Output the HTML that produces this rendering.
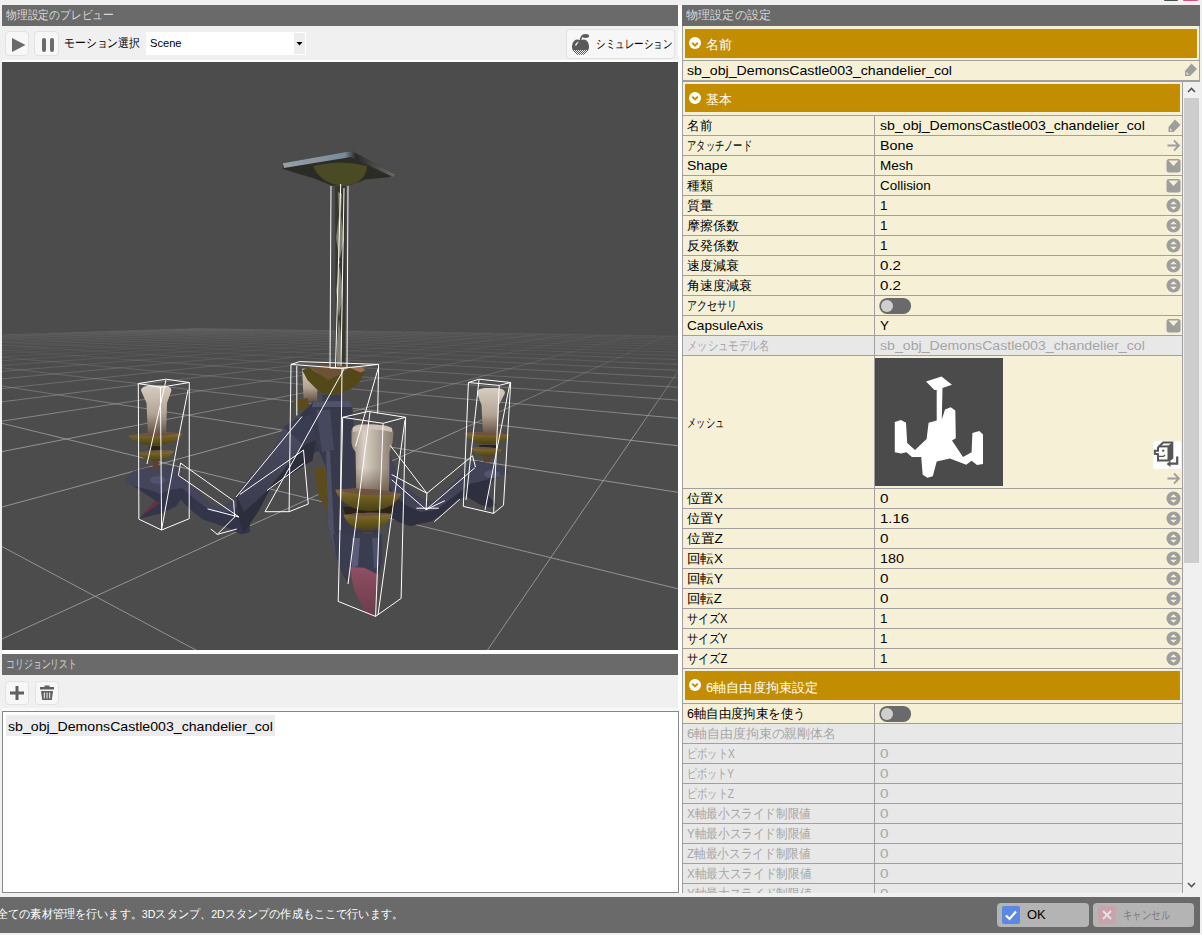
<!DOCTYPE html>
<html><head><meta charset="utf-8">
<style>
*{box-sizing:border-box;margin:0;padding:0}
html,body{width:1202px;height:935px;overflow:hidden;background:#f0f0f0;font-family:"Liberation Sans",sans-serif;color:#000}
.abs{position:absolute}
.hdr{position:absolute;background:#6a6a6a;color:#d8d8d8;font-size:12px;line-height:21px;padding-left:4px;white-space:nowrap;overflow:hidden}
.fit{display:inline-block;transform-origin:0 50%;white-space:nowrap}
.btn{position:absolute;background:#f7f7f7;border:1px solid #e2e2e2;border-radius:4px}
.gold{position:absolute;background:#c28e00;color:#fff;font-size:13px;white-space:nowrap}
.gold .ic{position:absolute;left:4px;top:8px;width:12px;height:12px;border-radius:50%;background:#fff}
.gold .tx{position:absolute;left:21px;top:2px;line-height:28px}
.row{position:absolute;left:0;width:500px;height:20px;border-bottom:1px solid #a0a0a0;background:#f6f0d6;font-size:14px;white-space:nowrap}
.row .k{position:absolute;left:4px;top:0;line-height:20px}
.row .v{position:absolute;left:197px;top:0;line-height:20px}
.row.dis{background:#e8e8e8;color:#a2a2a2}
.spin{position:absolute;left:484px;top:3px;width:14px;height:14px}
.dd{position:absolute;left:484px;top:3px;width:14px;height:14px}
</style></head><body>

<!-- LEFT PANEL -->
<div class="abs" style="left:678px;top:5px;width:4px;height:888px;background:#fff"></div>
<div class="hdr" style="left:2px;top:5px;width:676px;height:21px"><span class="fit" style="--w:108">物理設定のプレビュー</span></div>
<div class="abs" style="left:2px;top:26px;width:676px;height:36px;background:#f0f0f0"></div>
<div class="abs" style="left:2px;top:60px;width:676px;height:2px;background:#fff"></div>
<div class="btn" style="left:5px;top:31px;width:24px;height:25px">
  <svg width="24" height="25" style="position:absolute;left:-1px;top:-1px"><path d="M7 7 L20.5 14 L7 21 Z" fill="#6a6a6a"/></svg>
</div>
<div class="btn" style="left:34px;top:31px;width:25px;height:25px">
  <svg width="25" height="25" style="position:absolute;left:-1px;top:-1px"><rect x="8" y="7" width="4" height="14" rx="2" fill="#6a6a6a"/><rect x="16" y="7" width="4" height="14" rx="2" fill="#6a6a6a"/></svg>
</div>
<div class="abs" style="left:64px;top:35px;font-size:12px;line-height:17px;white-space:nowrap"><span class="fit" style="--w:76">モーション選択</span></div>
<div class="abs" style="left:146px;top:32px;width:160px;height:23px;background:#fff"></div>
<div class="abs" style="left:294px;top:33px;width:11px;height:21px;background:#ededed"></div>
<svg class="abs" style="left:294px;top:33px" width="11" height="21"><path d="M2.5 9 L8.5 9 L5.5 12.5 Z" fill="#000"/></svg>
<div class="abs" style="left:150px;top:36px;font-size:11px;line-height:15px"><span class="fit" style="--w:31.5">Scene</span></div>
<div class="btn" style="left:566px;top:29px;width:109px;height:30px">
  <svg width="26" height="26" style="position:absolute;left:2px;top:2px">
    <defs><pattern id="dith" width="2" height="2" patternUnits="userSpaceOnUse"><rect width="1" height="1" fill="#555"/><rect x="1" y="1" width="1" height="1" fill="#555"/></pattern></defs>
    <clipPath id="apc"><path d="M11.5 8.5 Q8 6.5 5 9 Q2.2 12 3.2 16.5 Q4.5 21.5 8.5 22.8 Q10.5 23.2 11.5 22.5 Q12.5 23.2 14.5 22.8 Q18.5 21.5 19.8 16.5 Q20.8 12 18 9 Q15 6.5 11.5 8.5 Z"/></clipPath>
    <g clip-path="url(#apc)"><rect x="0" y="0" width="26" height="18" fill="#5a5a5a"/><rect x="0" y="18" width="26" height="9" fill="url(#dith)"/></g><path d="M6 13 Q7 10 10 9.5 Q8 12 7 14 Z" fill="#f7f7f7"/>
    <path d="M11.5 9 Q11.5 5.5 13.5 3.5" stroke="#555" stroke-width="1.5" fill="none"/>
    <ellipse cx="16.5" cy="4" rx="3.6" ry="1.9" fill="#5a5a5a"/>
  </svg>
  <div class="abs" style="left:29px;top:6px;font-size:12px;line-height:17px;white-space:nowrap"><span class="fit" style="--w:76">シミュレーション</span></div>
</div>

<!-- VIEWPORT -->
<div class="abs" style="left:2px;top:62px;width:676px;height:588px;background:#4c4c4c;overflow:hidden">
<svg width="676" height="588" style="position:absolute;left:0;top:0"><path d="M61.4 292.8L43.2 291.4M43.2 291.4L26.3 290.2M26.3 290.2L10.6 289.0M10.6 289.0L-4.1 287.9M147.2 292.4L125.7 291.1M125.7 291.1L105.8 289.9M105.8 289.9L87.3 288.7M87.3 288.7L70.0 287.6M70.0 287.6L53.8 286.6M53.8 286.6L38.7 285.7M38.7 285.7L24.4 284.8M24.4 284.8L11.1 284.0M11.1 284.0L-1.6 283.2M-1.6 283.2L-13.5 282.4M233.9 292.1L209.0 290.7M209.0 290.7L186.0 289.5M186.0 289.5L164.6 288.4M164.6 288.4L144.6 287.3M144.6 287.3L126.0 286.3M126.0 286.3L108.5 285.4M108.5 285.4L92.1 284.5M92.1 284.5L76.6 283.7M76.6 283.7L62.1 282.9M62.1 282.9L48.3 282.1M48.3 282.1L35.4 281.4M35.4 281.4L23.1 280.8M23.1 280.8L11.4 280.2M11.4 280.2L0.3 279.6M0.3 279.6L-10.2 279.0M293.1 290.4L266.9 289.2M266.9 289.2L242.6 288.0M242.6 288.0L219.9 287.0M219.9 287.0L198.7 286.0M198.7 286.0L178.8 285.1M178.8 285.1L160.2 284.2M160.2 284.2L142.7 283.4M142.7 283.4L126.2 282.6M126.2 282.6L110.6 281.9M110.6 281.9L95.8 281.2M95.8 281.2L81.9 280.5M81.9 280.5L68.7 279.9M68.7 279.9L56.1 279.3M56.1 279.3L44.2 278.8M44.2 278.8L32.8 278.2M32.8 278.2L22.0 277.7M22.0 277.7L11.7 277.2M11.7 277.2L1.8 276.8M1.8 276.8L-7.6 276.3M377.8 290.1L348.5 288.8M348.5 288.8L321.2 287.7M321.2 287.7L295.7 286.6M295.7 286.6L271.9 285.7M271.9 285.7L249.7 284.7M249.7 284.7L228.8 283.9M228.8 283.9L209.2 283.1M209.2 283.1L190.7 282.3M190.7 282.3L173.2 281.6M173.2 281.6L156.7 280.9M156.7 280.9L141.1 280.2M141.1 280.2L126.3 279.6M126.3 279.6L112.2 279.0M112.2 279.0L98.9 278.5M98.9 278.5L86.2 278.0M86.2 278.0L74.1 277.5M74.1 277.5L62.5 277.0M62.5 277.0L51.5 276.5M51.5 276.5L40.9 276.1M40.9 276.1L30.8 275.7M30.8 275.7L21.2 275.3M21.2 275.3L11.9 274.9M11.9 274.9L3.0 274.5M3.0 274.5L-5.5 274.2M463.4 289.7L430.7 288.5M430.7 288.5L400.4 287.4M400.4 287.4L372.2 286.3M372.2 286.3L345.8 285.3M345.8 285.3L321.1 284.4M321.1 284.4L297.9 283.6M297.9 283.6L276.1 282.8M276.1 282.8L255.6 282.0M255.6 282.0L236.2 281.3M236.2 281.3L218.0 280.6M218.0 280.6L200.7 280.0M200.7 280.0L184.3 279.4M184.3 279.4L168.7 278.8M168.7 278.8L153.9 278.2M153.9 278.2L139.8 277.7M139.8 277.7L126.4 277.2M126.4 277.2L113.6 276.7M113.6 276.7L101.4 276.3M101.4 276.3L89.7 275.8M89.7 275.8L78.6 275.4M78.6 275.4L67.9 275.0M67.9 275.0L57.6 274.7M57.6 274.7L47.8 274.3M47.8 274.3L38.3 273.9M38.3 273.9L29.2 273.6M29.2 273.6L20.5 273.3M20.5 273.3L12.1 273.0M12.1 273.0L4.0 272.7M549.6 289.3L513.7 288.1M513.7 288.1L480.3 287.0M480.3 287.0L449.2 286.0M449.2 286.0L420.2 285.0M420.2 285.0L393.0 284.1M393.0 284.1L367.5 283.3M367.5 283.3L343.5 282.5M343.5 282.5L321.0 281.7M321.0 281.7L299.7 281.0M299.7 281.0L279.6 280.3M279.6 280.3L260.6 279.7M260.6 279.7L242.6 279.1M242.6 279.1L225.5 278.5M225.5 278.5L209.2 278.0M209.2 278.0L193.8 277.4M193.8 277.4L179.0 277.0M179.0 277.0L165.0 276.5M165.0 276.5L151.6 276.0M151.6 276.0L138.8 275.6M138.8 275.6L126.5 275.2M126.5 275.2L114.8 274.8M114.8 274.8L103.5 274.4M103.5 274.4L92.7 274.1M92.7 274.1L82.3 273.7M82.3 273.7L72.4 273.4M72.4 273.4L62.8 273.1M62.8 273.1L53.6 272.8M53.6 272.8L44.7 272.5M44.7 272.5L36.2 272.2M36.2 272.2L27.9 271.9M636.7 289.0L597.4 287.8M597.4 287.8L560.9 286.7M560.9 286.7L526.9 285.7M526.9 285.7L495.1 284.7M495.1 284.7L465.4 283.8M465.4 283.8L437.6 282.9M437.6 282.9L411.4 282.1M411.4 282.1L386.8 281.4M386.8 281.4L363.6 280.7M363.6 280.7L341.7 280.0M341.7 280.0L320.9 279.4M320.9 279.4L301.2 278.8M301.2 278.8L282.6 278.2M282.6 278.2L264.9 277.7M264.9 277.7L248.0 277.2M248.0 277.2L232.0 276.7M232.0 276.7L216.6 276.2M216.6 276.2L202.0 275.8M202.0 275.8L188.1 275.4M188.1 275.4L174.7 275.0M174.7 275.0L161.9 274.6M161.9 274.6L149.6 274.2M149.6 274.2L137.9 273.8M137.9 273.8L126.6 273.5M126.6 273.5L115.7 273.2M115.7 273.2L105.3 272.8M105.3 272.8L95.3 272.5M95.3 272.5L85.6 272.3M85.6 272.3L76.3 272.0M76.3 272.0L67.3 271.7M67.3 271.7L58.6 271.4M58.6 271.4L50.2 271.2M724.5 288.6L681.8 287.4M681.8 287.4L642.1 286.3M642.1 286.3L605.1 285.3M605.1 285.3L570.7 284.4M570.7 284.4L538.4 283.5M538.4 283.5L508.2 282.6M508.2 282.6L479.8 281.8M479.8 281.8L453.1 281.1M453.1 281.1L427.9 280.4M427.9 280.4L404.1 279.7M404.1 279.7L381.6 279.1M381.6 279.1L360.3 278.5M360.3 278.5L340.1 278.0M340.1 278.0L320.8 277.4M320.8 277.4L302.6 276.9M302.6 276.9L285.2 276.4M285.2 276.4L268.6 276.0M268.6 276.0L252.7 275.5M252.7 275.5L237.6 275.1M237.6 275.1L223.1 274.7M223.1 274.7L209.3 274.3M209.3 274.3L196.0 274.0M196.0 274.0L183.3 273.6M183.3 273.6L171.0 273.3M171.0 273.3L159.3 272.9M159.3 272.9L148.0 272.6M148.0 272.6L137.1 272.3M137.1 272.3L126.7 272.0M126.7 272.0L116.6 271.8M116.6 271.8L106.8 271.5M106.8 271.5L97.5 271.2M97.5 271.2L88.4 271.0M88.4 271.0L79.7 270.7M79.7 270.7L71.2 270.5M724.0 286.0L684.1 285.0M684.1 285.0L646.8 284.0M646.8 284.0L612.0 283.1M612.0 283.1L579.3 282.3M579.3 282.3L548.7 281.5M548.7 281.5L519.8 280.8M519.8 280.8L492.6 280.1M492.6 280.1L466.9 279.4M466.9 279.4L442.7 278.8M442.7 278.8L419.7 278.2M419.7 278.2L397.9 277.7M397.9 277.7L377.1 277.2M377.1 277.2L357.4 276.7M357.4 276.7L338.7 276.2M338.7 276.2L320.8 275.7M320.8 275.7L303.7 275.3M303.7 275.3L287.4 274.9M287.4 274.9L271.8 274.5M271.8 274.5L256.9 274.1M256.9 274.1L242.6 273.7M242.6 273.7L228.9 273.4M228.9 273.4L215.7 273.0M215.7 273.0L203.0 272.7M203.0 272.7L190.9 272.4M190.9 272.4L179.2 272.1M179.2 272.1L167.9 271.8M167.9 271.8L157.0 271.6M157.0 271.6L146.6 271.3M146.6 271.3L136.5 271.0M136.5 271.0L126.7 270.8M126.7 270.8L117.3 270.5M117.3 270.5L108.2 270.3M108.2 270.3L99.4 270.1M99.4 270.1L90.9 269.9M723.5 283.7L686.1 282.8M686.1 282.8L651.0 282.0M651.0 282.0L618.0 281.2M618.0 281.2L587.0 280.5M587.0 280.5L557.8 279.8M557.8 279.8L530.2 279.2M530.2 279.2L504.1 278.5M504.1 278.5L479.4 278.0M479.4 278.0L456.0 277.4M456.0 277.4L433.8 276.9M433.8 276.9L412.6 276.4M412.6 276.4L392.5 275.9M392.5 275.9L373.3 275.5M373.3 275.5L355.0 275.0M355.0 275.0L337.5 274.6M337.5 274.6L320.7 274.2M320.7 274.2L304.7 273.9M304.7 273.9L289.4 273.5M289.4 273.5L274.7 273.2M274.7 273.2L260.5 272.8M260.5 272.8L247.0 272.5M247.0 272.5L233.9 272.2M233.9 272.2L221.4 271.9M221.4 271.9L209.3 271.6M209.3 271.6L197.7 271.3M197.7 271.3L186.5 271.1M186.5 271.1L175.6 270.8M175.6 270.8L165.2 270.6M165.2 270.6L155.1 270.3M155.1 270.3L145.3 270.1M145.3 270.1L135.9 269.9M135.9 269.9L126.8 269.7M126.8 269.7L117.9 269.5M117.9 269.5L109.4 269.3M723.2 281.7L687.9 280.9M687.9 280.9L654.7 280.2M654.7 280.2L623.4 279.5M623.4 279.5L593.9 278.9M593.9 278.9L566.0 278.3M566.0 278.3L539.6 277.7M539.6 277.7L514.5 277.1M514.5 277.1L490.7 276.6M490.7 276.6L468.1 276.1M468.1 276.1L446.6 275.7M446.6 275.7L426.1 275.2M426.1 275.2L406.5 274.8M406.5 274.8L387.8 274.4M387.8 274.4L369.9 274.0M369.9 274.0L352.8 273.6M352.8 273.6L336.4 273.3M336.4 273.3L320.7 272.9M320.7 272.9L305.6 272.6M305.6 272.6L291.1 272.3M291.1 272.3L277.2 272.0M277.2 272.0L263.8 271.7M263.8 271.7L250.9 271.4M250.9 271.4L238.5 271.1M238.5 271.1L226.5 270.9M226.5 270.9L215.0 270.6M215.0 270.6L203.8 270.4M203.8 270.4L193.0 270.1M193.0 270.1L182.6 269.9M182.6 269.9L172.5 269.7M172.5 269.7L162.8 269.5M162.8 269.5L153.4 269.3M153.4 269.3L144.2 269.1M144.2 269.1L135.4 268.9M135.4 268.9L126.8 268.7M722.8 279.9L689.4 279.2M689.4 279.2L658.0 278.6M658.0 278.6L628.2 278.0M628.2 278.0L600.1 277.4M600.1 277.4L573.4 276.9M573.4 276.9L548.0 276.3M548.0 276.3L523.9 275.9M523.9 275.9L501.0 275.4M501.0 275.4L479.1 275.0M479.1 275.0L458.3 274.5M458.3 274.5L438.4 274.1M438.4 274.1L419.3 273.7M419.3 273.7L401.1 273.4M401.1 273.4L383.7 273.0M383.7 273.0L367.0 272.7M367.0 272.7L350.9 272.4M350.9 272.4L335.5 272.1M335.5 272.1L320.7 271.8M320.7 271.8L306.4 271.5M306.4 271.5L292.7 271.2M292.7 271.2L279.5 270.9M279.5 270.9L266.7 270.7M266.7 270.7L254.4 270.4M254.4 270.4L242.6 270.2M242.6 270.2L231.1 270.0M231.1 270.0L220.0 269.7M220.0 269.7L209.3 269.5M209.3 269.5L199.0 269.3M199.0 269.3L189.0 269.1M189.0 269.1L179.2 268.9M179.2 268.9L169.8 268.7M169.8 268.7L160.7 268.5M160.7 268.5L151.9 268.4M151.9 268.4L143.3 268.2M722.5 278.3L690.9 277.7M690.9 277.7L660.9 277.1M660.9 277.1L632.6 276.6M632.6 276.6L605.7 276.1M605.7 276.1L580.1 275.6M580.1 275.6L555.7 275.1M555.7 275.1L532.5 274.7M532.5 274.7L510.4 274.3M510.4 274.3L489.2 273.9M489.2 273.9L469.0 273.5M469.0 273.5L449.7 273.1M449.7 273.1L431.2 272.8M431.2 272.8L413.4 272.5M413.4 272.5L396.4 272.1M396.4 272.1L380.0 271.8M380.0 271.8L364.3 271.5M364.3 271.5L349.2 271.3M349.2 271.3L334.6 271.0M334.6 271.0L320.6 270.7M320.6 270.7L307.1 270.5M307.1 270.5L294.1 270.2M294.1 270.2L281.5 270.0M281.5 270.0L269.4 269.8M269.4 269.8L257.6 269.5M257.6 269.5L246.3 269.3M246.3 269.3L235.3 269.1M235.3 269.1L224.7 268.9M224.7 268.9L214.4 268.7M214.4 268.7L204.4 268.5M204.4 268.5L194.7 268.4M194.7 268.4L185.4 268.2M185.4 268.2L176.3 268.0M176.3 268.0L167.4 267.8M167.4 267.8L158.9 267.7M722.2 276.8L692.2 276.3M692.2 276.3L663.6 275.8M663.6 275.8L636.5 275.3M636.5 275.3L610.7 274.9M610.7 274.9L586.2 274.4M586.2 274.4L562.7 274.0M562.7 274.0L540.4 273.6M540.4 273.6L519.0 273.3M519.0 273.3L498.5 272.9M498.5 272.9L478.9 272.6M478.9 272.6L460.1 272.2M460.1 272.2L442.1 271.9M442.1 271.9L424.8 271.6M424.8 271.6L408.2 271.3M408.2 271.3L392.2 271.0M392.2 271.0L376.8 270.8M376.8 270.8L362.0 270.5M362.0 270.5L347.7 270.3M347.7 270.3L333.9 270.0M333.9 270.0L320.6 269.8M320.6 269.8L307.8 269.6M307.8 269.6L295.3 269.3M295.3 269.3L283.4 269.1M283.4 269.1L271.7 268.9M271.7 268.9L260.5 268.7M260.5 268.7L249.6 268.5M249.6 268.5L239.1 268.3M239.1 268.3L228.9 268.2M228.9 268.2L219.0 268.0M219.0 268.0L209.4 267.8M209.4 267.8L200.0 267.7M200.0 267.7L191.0 267.5M191.0 267.5L182.2 267.4M182.2 267.4L173.6 267.2M722.0 275.5L693.3 275.0M693.3 275.0L666.1 274.6M666.1 274.6L640.1 274.2M640.1 274.2L615.4 273.8M615.4 273.8L591.7 273.4M591.7 273.4L569.2 273.0M569.2 273.0L547.6 272.7M547.6 272.7L526.9 272.3M526.9 272.3L507.1 272.0M507.1 272.0L488.0 271.7M488.0 271.7L469.8 271.4M469.8 271.4L452.2 271.1M452.2 271.1L435.4 270.8M435.4 270.8L419.1 270.5M419.1 270.5L403.5 270.3M403.5 270.3L388.4 270.0M388.4 270.0L373.9 269.8M373.9 269.8L359.8 269.6M359.8 269.6L346.3 269.4M346.3 269.4L333.2 269.1M333.2 269.1L320.6 268.9M320.6 268.9L308.3 268.7M308.3 268.7L296.5 268.5M296.5 268.5L285.0 268.3M285.0 268.3L273.9 268.2M273.9 268.2L263.1 268.0M263.1 268.0L252.7 267.8M252.7 267.8L242.6 267.7M242.6 267.7L232.7 267.5M232.7 267.5L223.2 267.3M223.2 267.3L213.9 267.2M213.9 267.2L204.9 267.0M204.9 267.0L196.1 266.9M196.1 266.9L187.6 266.8M721.8 274.8L694.0 274.3M694.0 274.3L667.4 273.9M667.4 273.9L642.1 273.5M642.1 273.5L618.0 273.2M618.0 273.2L594.9 272.8M594.9 272.8L572.8 272.4M572.8 272.4L551.6 272.1M551.6 272.1L531.3 271.8M531.3 271.8L511.9 271.5M511.9 271.5L493.2 271.2M493.2 271.2L475.2 270.9M475.2 270.9L458.0 270.6M458.0 270.6L441.3 270.4M441.3 270.4L425.3 270.1M425.3 270.1L409.9 269.9M409.9 269.9L395.0 269.6M395.0 269.6L380.6 269.4M380.6 269.4L366.8 269.2M366.8 269.2L353.4 269.0M353.4 269.0L340.4 268.8M340.4 268.8L327.9 268.6M327.9 268.6L315.8 268.4M315.8 268.4L304.0 268.2M304.0 268.2L292.6 268.0M292.6 268.0L281.6 267.8M281.6 267.8L270.9 267.7M270.9 267.7L260.5 267.5M260.5 267.5L250.4 267.4M250.4 267.4L240.6 267.2M240.6 267.2L231.1 267.1M231.1 267.1L221.9 266.9M221.9 266.9L212.9 266.8M212.9 266.8L204.2 266.6M204.2 266.6L195.7 266.5M689.9 289.2L690.9 287.7M690.9 287.7L691.9 286.3M691.9 286.3L692.7 285.0M692.7 285.0L693.6 283.8M693.6 283.8L694.4 282.7M694.4 282.7L695.1 281.6M695.1 281.6L695.8 280.6M695.8 280.6L696.4 279.7M696.4 279.7L697.0 278.8M697.0 278.8L697.6 278.0M697.6 278.0L698.1 277.2M632.4 288.3L635.6 286.8M635.6 286.8L638.6 285.4M638.6 285.4L641.4 284.2M641.4 284.2L644.0 283.0M644.0 283.0L646.4 281.9M646.4 281.9L648.6 280.9M648.6 280.9L650.8 279.9M650.8 279.9L652.8 279.0M652.8 279.0L654.6 278.1M654.6 278.1L656.4 277.3M656.4 277.3L658.1 276.5M658.1 276.5L659.7 275.8M659.7 275.8L661.2 275.1M661.2 275.1L662.6 274.5M662.6 274.5L663.9 273.9M572.6 289.0L578.4 287.4M578.4 287.4L583.7 286.0M583.7 286.0L588.6 284.7M588.6 284.7L593.1 283.4M593.1 283.4L597.4 282.3M597.4 282.3L601.3 281.2M601.3 281.2L605.0 280.2M605.0 280.2L608.5 279.2M608.5 279.2L611.8 278.3M611.8 278.3L614.9 277.5M614.9 277.5L617.8 276.7M617.8 276.7L620.5 276.0M620.5 276.0L623.1 275.3M623.1 275.3L625.6 274.6M625.6 274.6L627.9 273.9M627.9 273.9L630.1 273.3M511.2 289.9L519.7 288.2M519.7 288.2L527.5 286.7M527.5 286.7L534.8 285.2M534.8 285.2L541.5 283.9M541.5 283.9L547.7 282.7M547.7 282.7L553.5 281.6M553.5 281.6L559.0 280.5M559.0 280.5L564.0 279.5M564.0 279.5L568.8 278.6M568.8 278.6L573.3 277.7M573.3 277.7L577.5 276.9M577.5 276.9L581.4 276.1M581.4 276.1L585.2 275.4M585.2 275.4L588.7 274.7M588.7 274.7L592.1 274.1M592.1 274.1L595.3 273.4M595.3 273.4L598.3 272.8M447.5 290.8L459.1 289.0M459.1 289.0L469.8 287.4M469.8 287.4L479.7 285.9M479.7 285.9L488.8 284.5M488.8 284.5L497.2 283.2M497.2 283.2L505.0 282.0M505.0 282.0L512.3 280.9M512.3 280.9L519.1 279.9M519.1 279.9L525.4 278.9M525.4 278.9L531.4 278.0M531.4 278.0L537.0 277.2M537.0 277.2L542.3 276.4M542.3 276.4L547.2 275.6M547.2 275.6L551.9 274.9M551.9 274.9L556.4 274.2M556.4 274.2L560.6 273.6M560.6 273.6L564.6 272.9M564.6 272.9L568.4 272.4M396.1 290.0L410.0 288.3M410.0 288.3L422.8 286.7M422.8 286.7L434.5 285.2M434.5 285.2L445.3 283.9M445.3 283.9L455.3 282.6M455.3 282.6L464.6 281.4M464.6 281.4L473.3 280.3M473.3 280.3L481.4 279.3M481.4 279.3L489.0 278.4M489.0 278.4L496.1 277.5M496.1 277.5L502.8 276.6M502.8 276.6L509.1 275.8M509.1 275.8L515.0 275.1M515.0 275.1L520.6 274.4M520.6 274.4L525.9 273.7M525.9 273.7L530.9 273.1M530.9 273.1L535.6 272.5M535.6 272.5L540.2 271.9M330.0 291.2L347.6 289.3M347.6 289.3L363.6 287.6M363.6 287.6L378.2 286.0M378.2 286.0L391.8 284.6M391.8 284.6L404.2 283.2M404.2 283.2L415.8 282.0M415.8 282.0L426.5 280.8M426.5 280.8L436.5 279.8M436.5 279.8L445.8 278.8M445.8 278.8L454.6 277.8M454.6 277.8L462.7 276.9M462.7 276.9L470.4 276.1M470.4 276.1L477.7 275.3M477.7 275.3L484.5 274.6M484.5 274.6L490.9 273.9M490.9 273.9L497.0 273.3M497.0 273.3L502.8 272.6M502.8 272.6L508.3 272.1M508.3 272.1L513.5 271.5M263.5 292.1L284.7 290.2M284.7 290.2L304.1 288.4M304.1 288.4L321.7 286.7M321.7 286.7L338.0 285.2M338.0 285.2L352.9 283.8M352.9 283.8L366.7 282.5M366.7 282.5L379.5 281.3M379.5 281.3L391.4 280.2M391.4 280.2L402.5 279.1M402.5 279.1L412.9 278.2M412.9 278.2L422.6 277.3M422.6 277.3L431.7 276.4M431.7 276.4L440.2 275.6M440.2 275.6L448.3 274.8M448.3 274.8L455.9 274.1M455.9 274.1L463.1 273.5M463.1 273.5L469.9 272.8M469.9 272.8L476.3 272.2M476.3 272.2L482.4 271.6M482.4 271.6L488.2 271.1M204.7 292.3L228.6 290.4M228.6 290.4L250.3 288.5M250.3 288.5L270.3 286.9M270.3 286.9L288.5 285.4M288.5 285.4L305.4 284.0M305.4 284.0L321.0 282.7M321.0 282.7L335.4 281.5M335.4 281.5L348.8 280.3M348.8 280.3L361.3 279.3M361.3 279.3L373.0 278.3M373.0 278.3L383.9 277.4M383.9 277.4L394.2 276.6M394.2 276.6L403.9 275.8M403.9 275.8L413.0 275.0M413.0 275.0L421.5 274.3M421.5 274.3L429.6 273.6M429.6 273.6L437.3 273.0M437.3 273.0L444.6 272.4M444.6 272.4L451.5 271.8M451.5 271.8L458.1 271.2M458.1 271.2L464.3 270.7M146.3 292.5L172.9 290.6M172.9 290.6L197.0 288.7M197.0 288.7L219.1 287.1M219.1 287.1L239.4 285.6M239.4 285.6L258.2 284.1M258.2 284.1L275.5 282.8M275.5 282.8L291.5 281.6M291.5 281.6L306.4 280.5M306.4 280.5L320.3 279.5M320.3 279.5L333.3 278.5M333.3 278.5L345.5 277.6M345.5 277.6L356.9 276.7M356.9 276.7L367.7 275.9M367.7 275.9L377.8 275.2M377.8 275.2L387.3 274.4M387.3 274.4L396.4 273.8M396.4 273.8L404.9 273.1M404.9 273.1L413.0 272.5M413.0 272.5L420.7 271.9M420.7 271.9L428.0 271.4M428.0 271.4L435.0 270.9M435.0 270.9L441.6 270.4M88.5 292.7L117.6 290.7M117.6 290.7L144.1 288.9M144.1 288.9L168.4 287.3M168.4 287.3L190.7 285.7M190.7 285.7L211.2 284.3M211.2 284.3L230.3 283.0M230.3 283.0L247.9 281.8M247.9 281.8L264.3 280.7M264.3 280.7L279.6 279.6M279.6 279.6L293.9 278.7M293.9 278.7L307.3 277.8M307.3 277.8L319.8 276.9M319.8 276.9L331.7 276.1M331.7 276.1L342.8 275.3M342.8 275.3L353.3 274.6M353.3 274.6L363.2 273.9M363.2 273.9L372.6 273.3M372.6 273.3L381.6 272.7M381.6 272.7L390.0 272.1M390.0 272.1L398.1 271.5M398.1 271.5L405.7 271.0M405.7 271.0L413.1 270.5M413.1 270.5L420.0 270.0M31.1 292.9L62.7 290.9M62.7 290.9L91.6 289.1M91.6 289.1L118.0 287.5M118.0 287.5L142.2 285.9M142.2 285.9L164.6 284.5M164.6 284.5L185.3 283.2M185.3 283.2L204.5 282.0M204.5 282.0L222.4 280.9M222.4 280.9L239.1 279.8M239.1 279.8L254.6 278.8M254.6 278.8L269.2 277.9M269.2 277.9L282.9 277.1M282.9 277.1L295.8 276.2M295.8 276.2L308.0 275.5M308.0 275.5L319.4 274.8M319.4 274.8L330.3 274.1M330.3 274.1L340.5 273.4M340.5 273.4L350.2 272.8M350.2 272.8L359.5 272.2M359.5 272.2L368.3 271.7M368.3 271.7L376.6 271.1M376.6 271.1L384.6 270.6M384.6 270.6L392.2 270.2M392.2 270.2L399.5 269.7M-25.9 293.1L8.3 291.1M8.3 291.1L39.4 289.3M39.4 289.3L67.9 287.6M67.9 287.6L94.1 286.1M94.1 286.1L118.3 284.7M118.3 284.7L140.7 283.4M140.7 283.4L161.4 282.2M161.4 282.2L180.7 281.0M180.7 281.0L198.8 280.0M198.8 280.0L215.6 279.0M215.6 279.0L231.4 278.1M231.4 278.1L246.2 277.2M246.2 277.2L260.1 276.4M260.1 276.4L273.3 275.6M273.3 275.6L285.7 274.9M285.7 274.9L297.4 274.2M297.4 274.2L308.5 273.6M308.5 273.6L319.1 273.0M319.1 273.0L329.1 272.4M329.1 272.4L338.6 271.8M338.6 271.8L347.6 271.3M347.6 271.3L356.3 270.8M356.3 270.8L364.5 270.3M364.5 270.3L372.4 269.8M372.4 269.8L379.9 269.4M-12.4 289.5L18.2 287.8M18.2 287.8L46.3 286.3M46.3 286.3L72.3 284.9M72.3 284.9L96.3 283.6M96.3 283.6L118.6 282.3M118.6 282.3L139.3 281.2M139.3 281.2L158.7 280.2M158.7 280.2L176.8 279.2M176.8 279.2L193.7 278.2M193.7 278.2L209.7 277.4M209.7 277.4L224.7 276.6M224.7 276.6L238.8 275.8M238.8 275.8L252.1 275.1M252.1 275.1L264.7 274.4M264.7 274.4L276.7 273.7M276.7 273.7L288.0 273.1M288.0 273.1L298.8 272.5M298.8 272.5L309.0 272.0M309.0 272.0L318.8 271.4M318.8 271.4L328.1 270.9M328.1 270.9L336.9 270.4M336.9 270.4L345.4 270.0M345.4 270.0L353.5 269.5M353.5 269.5L361.3 269.1M-31.2 288.0L-1.2 286.5M-1.2 286.5L26.5 285.1M26.5 285.1L52.2 283.7M52.2 283.7L76.0 282.5M76.0 282.5L98.1 281.4M98.1 281.4L118.8 280.3M118.8 280.3L138.2 279.3M138.2 279.3L156.3 278.4M156.3 278.4L173.3 277.5M173.3 277.5L189.3 276.7M189.3 276.7L204.4 275.9M204.4 275.9L218.7 275.2M218.7 275.2L232.2 274.5M232.2 274.5L245.0 273.9M245.0 273.9L257.1 273.2M257.1 273.2L268.6 272.7M268.6 272.7L279.6 272.1M279.6 272.1L290.0 271.6M290.0 271.6L300.0 271.0M300.0 271.0L309.4 270.6M309.4 270.6L318.5 270.1M318.5 270.1L327.2 269.7M327.2 269.7L335.5 269.2M335.5 269.2L343.5 268.8M-18.9 285.2L8.3 283.9M8.3 283.9L33.6 282.7M33.6 282.7L57.2 281.6M57.2 281.6L79.2 280.5M79.2 280.5L99.7 279.5M99.7 279.5L119.0 278.6M119.0 278.6L137.1 277.7M137.1 277.7L154.2 276.9M154.2 276.9L170.3 276.1M170.3 276.1L185.4 275.4M185.4 275.4L199.8 274.7M199.8 274.7L213.4 274.0M213.4 274.0L226.3 273.4M226.3 273.4L238.6 272.8M238.6 272.8L250.2 272.2M250.2 272.2L261.4 271.7M261.4 271.7L271.9 271.2M271.9 271.2L282.1 270.7M282.1 270.7L291.7 270.2M291.7 270.2L301.0 269.8M301.0 269.8L309.8 269.4M309.8 269.4L318.3 268.9M318.3 268.9L326.4 268.6M-8.5 282.9L16.5 281.7M16.5 281.7L39.8 280.7M39.8 280.7L61.5 279.7M61.5 279.7L82.0 278.7M82.0 278.7L101.1 277.9M101.1 277.9L119.2 277.0M119.2 277.0L136.2 276.2M136.2 276.2L152.3 275.5M152.3 275.5L167.6 274.8M167.6 274.8L182.0 274.2M182.0 274.2L195.7 273.5M195.7 273.5L208.7 272.9M208.7 272.9L221.0 272.4M221.0 272.4L232.8 271.8M232.8 271.8L244.0 271.3M244.0 271.3L254.8 270.8M254.8 270.8L265.0 270.4M265.0 270.4L274.8 269.9M274.8 269.9L284.2 269.5M284.2 269.5L293.2 269.1M293.2 269.1L301.8 268.7M301.8 268.7L310.1 268.3M-24.0 281.9L0.5 280.8M0.5 280.8L23.5 279.8M23.5 279.8L45.1 278.9M45.1 278.9L65.3 278.0M65.3 278.0L84.4 277.2M84.4 277.2L102.4 276.4M102.4 276.4L119.4 275.7M119.4 275.7L135.4 275.0M135.4 275.0L150.7 274.3M150.7 274.3L165.1 273.7M165.1 273.7L178.9 273.1M178.9 273.1L191.9 272.5M191.9 272.5L204.4 272.0M204.4 272.0L216.3 271.5M216.3 271.5L227.6 271.0M227.6 271.0L238.4 270.5M238.4 270.5L248.8 270.0M248.8 270.0L258.7 269.6M258.7 269.6L268.2 269.2M268.2 269.2L277.3 268.8M277.3 268.8L286.1 268.4M286.1 268.4L294.5 268.1M-14.3 280.0L8.4 279.1M8.4 279.1L29.7 278.2M29.7 278.2L49.8 277.3M49.8 277.3L68.7 276.6M68.7 276.6L86.6 275.8M86.6 275.8L103.5 275.1M103.5 275.1L119.5 274.4M119.5 274.4L134.7 273.8M134.7 273.8L149.2 273.2M149.2 273.2L163.0 272.6M163.0 272.6L176.1 272.1M176.1 272.1L188.6 271.6M188.6 271.6L200.5 271.1M200.5 271.1L211.9 270.6M211.9 270.6L222.8 270.2M222.8 270.2L233.3 269.7M233.3 269.7L243.3 269.3M243.3 269.3L252.9 268.9M252.9 268.9L262.2 268.5M262.2 268.5L271.0 268.2M271.0 268.2L279.6 267.8M-5.8 278.3L15.3 277.5M15.3 277.5L35.1 276.7M35.1 276.7L53.9 276.0M53.9 276.0L71.7 275.3M71.7 275.3L88.5 274.6M88.5 274.6L104.5 274.0M104.5 274.0L119.6 273.4M119.6 273.4L134.1 272.8M134.1 272.8L147.9 272.2M147.9 272.2L161.0 271.7M161.0 271.7L173.5 271.2M173.5 271.2L185.5 270.7M185.5 270.7L197.0 270.3M197.0 270.3L208.0 269.9M208.0 269.9L218.5 269.4M218.5 269.4L228.6 269.0M228.6 269.0L238.3 268.7M238.3 268.7L247.6 268.3M247.6 268.3L256.6 267.9M256.6 267.9L265.2 267.6M-19.0 277.6L1.8 276.9M1.8 276.9L21.4 276.1M21.4 276.1L40.0 275.4M40.0 275.4L57.6 274.7M57.6 274.7L74.3 274.1M74.3 274.1L90.2 273.5M90.2 273.5L105.3 272.9M105.3 272.9L119.8 272.4M119.8 272.4L133.5 271.8M133.5 271.8L146.7 271.4M146.7 271.4L159.2 270.9M159.2 270.9L171.2 270.4M171.2 270.4L182.7 270.0M182.7 270.0L193.8 269.6M193.8 269.6L204.3 269.2M204.3 269.2L214.5 268.8M214.5 268.8L224.3 268.4M224.3 268.4L233.7 268.0M233.7 268.0L242.7 267.7M242.7 267.7L251.4 267.4M-11.0 276.3L8.4 275.5M8.4 275.5L26.8 274.9M26.8 274.9L44.3 274.2M44.3 274.2L60.9 273.6M60.9 273.6L76.7 273.1M76.7 273.1L91.8 272.5M91.8 272.5L106.1 272.0M106.1 272.0L119.9 271.5M119.9 271.5L133.0 271.0M133.0 271.0L145.5 270.5M145.5 270.5L157.6 270.1M157.6 270.1L169.1 269.7M169.1 269.7L180.2 269.3M180.2 269.3L190.8 268.9M190.8 268.9L201.0 268.5M201.0 268.5L210.8 268.2M210.8 268.2L220.3 267.8M220.3 267.8L229.4 267.5M229.4 267.5L238.2 267.2M-3.8 275.0L14.4 274.4M14.4 274.4L31.7 273.8M31.7 273.8L48.2 273.2M48.2 273.2L63.9 272.6M63.9 272.6L78.9 272.1M78.9 272.1L93.2 271.6M93.2 271.6L106.9 271.1M106.9 271.1L120.0 270.7M120.0 270.7L132.5 270.2M132.5 270.2L144.5 269.8M144.5 269.8L156.1 269.4M156.1 269.4L167.2 269.0M167.2 269.0L177.8 268.6M177.8 268.6L188.1 268.3M188.1 268.3L197.9 267.9M197.9 267.9L207.5 267.6M207.5 267.6L216.6 267.3M216.6 267.3L225.5 267.0M-15.4 274.5L2.6 273.9M2.6 273.9L19.8 273.3M19.8 273.3L36.1 272.8M36.1 272.8L51.7 272.2M51.7 272.2L66.6 271.7M66.6 271.7L80.8 271.3M80.8 271.3L94.5 270.8M94.5 270.8L107.5 270.3M107.5 270.3L120.1 269.9M120.1 269.9L132.1 269.5M132.1 269.5L143.6 269.1M143.6 269.1L154.7 268.8M154.7 268.8L165.4 268.4M165.4 268.4L175.7 268.0M175.7 268.0L185.6 267.7M185.6 267.7L195.1 267.4M195.1 267.4L204.3 267.1M204.3 267.1L213.2 266.8M-8.5 273.5L8.5 272.9M8.5 272.9L24.7 272.4M24.7 272.4L40.1 271.9M40.1 271.9L54.9 271.4M54.9 271.4L69.1 270.9M69.1 270.9L82.6 270.5M82.6 270.5L95.7 270.0M95.7 270.0L108.1 269.6M108.1 269.6L120.1 269.2M120.1 269.2L131.7 268.9M131.7 268.9L142.8 268.5M142.8 268.5L153.4 268.2M153.4 268.2L163.7 267.8M163.7 267.8L173.7 267.5M173.7 267.5L183.2 267.2M183.2 267.2L192.5 266.9M192.5 266.9L201.4 266.6M-13.9 273.2L3.0 272.7M3.0 272.7L19.1 272.2M19.1 272.2L34.5 271.7M34.5 271.7L49.3 271.2M49.3 271.2L63.4 270.8M63.4 270.8L76.9 270.3M76.9 270.3L89.9 269.9M89.9 269.9L102.4 269.5M102.4 269.5L114.4 269.1M114.4 269.1L125.9 268.7M125.9 268.7L137.0 268.4M137.0 268.4L147.7 268.0M147.7 268.0L157.9 267.7M157.9 267.7L167.9 267.4M167.9 267.4L177.5 267.1M177.5 267.1L186.7 266.8M186.7 266.8L195.7 266.5" stroke="#9a9a9a" stroke-width="1" fill="none" opacity="0.1"/><path d="M28.9 297.9L9.9 296.2M9.9 296.2L-7.6 294.6M125.4 297.5L102.3 295.8M102.3 295.8L81.0 294.2M81.0 294.2L61.4 292.8M222.9 297.1L195.6 295.4M195.6 295.4L170.4 293.9M170.4 293.9L147.2 292.4M321.5 296.8L289.8 295.1M289.8 295.1L260.7 293.5M260.7 293.5L233.9 292.1M421.0 296.4L384.9 294.7M384.9 294.7L351.8 293.2M351.8 293.2L321.3 291.7M321.3 291.7L293.1 290.4M481.0 294.3L443.8 292.8M443.8 292.8L409.5 291.4M409.5 291.4L377.8 290.1M578.0 294.0L536.7 292.4M536.7 292.4L498.6 291.0M498.6 291.0L463.4 289.7M676.1 293.6L630.4 292.1M630.4 292.1L588.4 290.6M588.4 290.6L549.6 289.3M725.1 291.7L679.1 290.3M679.1 290.3L636.7 289.0M686.2 294.6L687.5 292.7M687.5 292.7L688.7 290.9M688.7 290.9L689.9 289.2M620.9 293.5L625.1 291.6M625.1 291.6L628.9 289.9M628.9 289.9L632.4 288.3M552.2 294.6L559.6 292.6M559.6 292.6L566.4 290.7M566.4 290.7L572.6 289.0M480.5 295.8L491.7 293.7M491.7 293.7L501.9 291.7M501.9 291.7L511.2 289.9M420.7 294.9L434.7 292.8M434.7 292.8L447.5 290.8M345.7 296.4L364.2 294.1M364.2 294.1L380.9 292.0M380.9 292.0L396.1 290.0M289.4 295.5L310.7 293.2M310.7 293.2L330.0 291.2M214.1 296.8L240.0 294.3M240.0 294.3L263.5 292.1M149.1 297.0L178.3 294.5M178.3 294.5L204.7 292.3M84.7 297.2L117.1 294.7M117.1 294.7L146.3 292.5M20.9 297.4L56.4 294.9M56.4 294.9L88.5 292.7M-3.8 295.1L31.1 292.9" stroke="#9a9a9a" stroke-width="1" fill="none" opacity="0.15"/><path d="M72.4 301.8L49.7 299.7M49.7 299.7L28.9 297.9M178.4 301.4L150.7 299.4M150.7 299.4L125.4 297.5M285.6 301.0L252.8 299.0M252.8 299.0L222.9 297.1M394.0 300.7L356.0 298.6M356.0 298.6L321.5 296.8M503.6 300.3L460.4 298.2M460.4 298.2L421.0 296.4M614.5 299.9L565.8 297.8M565.8 297.8L521.5 296.0M521.5 296.0L481.0 294.3M726.6 299.5L672.5 297.5M672.5 297.5L623.1 295.6M623.1 295.6L578.0 294.0M725.8 295.2L676.1 293.6M683.1 299.1L684.7 296.7M684.7 296.7L686.2 294.6M605.9 300.3L611.4 297.8M611.4 297.8L616.4 295.6M616.4 295.6L620.9 293.5M535.0 299.3L544.0 296.8M544.0 296.8L552.2 294.6M454.4 300.9L468.2 298.2M468.2 298.2L480.5 295.8M388.0 299.9L405.2 297.3M405.2 297.3L420.7 294.9M302.3 301.8L325.2 299.0M325.2 299.0L345.7 296.4M239.3 300.9L265.8 298.1M265.8 298.1L289.4 295.5M152.5 302.5L185.1 299.5M185.1 299.5L214.1 296.8M80.0 302.7L116.5 299.7M116.5 299.7L149.1 297.0M8.1 302.9L48.6 299.9M48.6 299.9L84.7 297.2M-18.7 300.1L20.9 297.4" stroke="#9a9a9a" stroke-width="1" fill="none" opacity="0.2"/><path d="M8.9 306.9L-12.8 304.4M125.0 306.5L97.4 304.1M97.4 304.1L72.4 301.8M242.6 306.2L208.9 303.7M208.9 303.7L178.4 301.4M361.6 305.8L321.7 303.3M321.7 303.3L285.6 301.0M482.1 305.4L435.8 302.9M435.8 302.9L394.0 300.7M604.1 305.0L551.3 302.5M551.3 302.5L503.6 300.3M668.1 302.1L614.5 299.9M679.4 304.5L681.4 301.7M681.4 301.7L683.1 299.1M599.8 303.1L605.9 300.3M513.7 305.0L524.9 302.0M524.9 302.0L535.0 299.3M439.1 303.9L454.4 300.9M347.1 306.2L368.7 302.9M368.7 302.9L388.0 299.9M276.5 305.1L302.3 301.8M175.9 307.7L209.6 304.1M209.6 304.1L239.3 300.9M115.8 306.0L152.5 302.5M38.7 306.2L80.0 302.7M-37.6 306.4L8.1 302.9" stroke="#9a9a9a" stroke-width="1" fill="none" opacity="0.25"/><path d="M59.9 312.8L33.0 309.7M33.0 309.7L8.9 306.9M190.0 312.4L155.7 309.3M155.7 309.3L125.0 306.5M280.0 308.9L242.6 306.2M406.0 308.5L361.6 305.8M533.6 308.1L482.1 305.4M662.9 307.7L604.1 305.0M727.6 304.6L668.1 302.1M677.2 307.8L679.4 304.5M585.4 309.7L593.0 306.2M593.0 306.2L599.8 303.1M501.2 308.5L513.7 305.0M402.4 311.1L421.9 307.3M421.9 307.3L439.1 303.9M322.7 309.9L347.1 306.2M247.3 308.8L276.5 305.1M137.5 311.8L175.9 307.7M73.9 309.9L115.8 306.0M-8.3 310.1L38.7 306.2" stroke="#9a9a9a" stroke-width="1" fill="none" opacity="0.3"/><path d="M90.1 316.3L59.9 312.8M228.6 315.9L190.0 312.4M369.1 315.5L321.9 312.0M321.9 312.0L280.0 308.9M511.7 315.1L455.7 311.6M455.7 311.6L406.0 308.5M591.3 311.2L533.6 308.1M728.8 310.8L662.9 307.7M674.7 311.4L677.2 307.8M576.7 313.7L585.4 309.7M486.9 312.4L501.2 308.5M380.2 315.4L402.4 311.1M294.7 314.2L322.7 309.9M175.5 317.8L213.9 313.0M213.9 313.0L247.3 308.8M93.2 316.6L137.5 311.8M25.7 314.4L73.9 309.9" stroke="#9a9a9a" stroke-width="1" fill="none" opacity="0.35"/><path d="M124.4 320.2L90.1 316.3M272.3 319.8L228.6 315.9M422.6 319.5L369.1 315.5M575.3 319.1L511.7 315.1M730.4 318.7L656.4 314.7M656.4 314.7L591.3 311.2M671.9 315.5L674.7 311.4M566.8 318.2L576.7 313.7M470.7 316.8L486.9 312.4M354.5 320.4L380.2 315.4M262.5 319.1L294.7 314.2M41.5 322.1L93.2 316.6M-30.3 319.7L25.7 314.4" stroke="#9a9a9a" stroke-width="1" fill="none" opacity="0.4"/><path d="M20.2 327.2L-9.4 322.5M163.4 324.7L124.4 320.2M322.3 324.4L272.3 319.8M483.9 324.0L422.6 319.5M648.1 323.6L575.3 319.1M668.7 320.1L671.9 315.5M555.4 323.4L566.8 318.2M452.0 321.9L470.7 316.8M324.6 326.3L354.5 320.4M225.0 324.8L262.5 319.1M130.7 323.4L175.5 317.8M-19.6 328.7L41.5 322.1" stroke="#9a9a9a" stroke-width="1" fill="none" opacity="0.45"/><path d="M54.3 332.5L20.2 327.2M208.5 329.9L163.4 324.7M380.0 329.6L322.3 324.4M554.6 329.2L483.9 324.0M732.4 328.8L648.1 323.6M665.1 325.5L668.7 320.1M542.2 329.5L555.4 323.4M430.2 327.8L452.0 321.9M180.7 331.6L225.0 324.8M77.9 330.1L130.7 323.4" stroke="#9a9a9a" stroke-width="1" fill="none" opacity="0.5"/><path d="M94.0 338.8L54.3 332.5M261.0 336.0L208.5 329.9M447.3 335.6L380.0 329.6M637.2 335.3L554.6 329.2M660.8 331.8L665.1 325.5M526.5 336.6L542.2 329.5M404.5 334.8L430.2 327.8M289.4 333.1L324.6 326.3M14.5 338.0L77.9 330.1" stroke="#9a9a9a" stroke-width="1" fill="none" opacity="0.55"/><path d="M322.9 343.1L261.0 336.0M655.7 339.2L660.8 331.8M373.7 343.2L404.5 334.8M247.2 341.4L289.4 333.1M127.7 339.7L180.7 331.6" stroke="#9a9a9a" stroke-width="1" fill="none" opacity="0.6"/><path d="M140.8 346.1L94.0 338.8M526.8 342.8L447.3 335.6M735.0 342.5L637.2 335.3M507.8 345.1L526.5 336.6M63.0 349.5L127.7 339.7M-62.8 347.8L14.5 338.0" stroke="#9a9a9a" stroke-width="1" fill="none" opacity="0.65"/><path d="M196.9 355.0L140.8 346.1M397.1 351.6L322.9 343.1M622.2 351.4L526.8 342.8M649.6 348.1L655.7 339.2M336.2 353.4L373.7 343.2M195.8 351.4L247.2 341.4" stroke="#9a9a9a" stroke-width="1" fill="none" opacity="0.7"/><path d="M-0.9 361.1L-39.1 351.8M642.2 358.9L649.6 348.1M485.1 355.5L507.8 345.1M131.7 363.9L195.8 351.4M-17.7 361.9L63.0 349.5" stroke="#9a9a9a" stroke-width="1" fill="none" opacity="0.75"/><path d="M265.2 365.7L196.9 355.0M487.5 362.1L397.1 351.6M738.8 362.0L622.2 351.4M456.7 368.5L485.1 355.5M289.6 366.1L336.2 353.4" stroke="#9a9a9a" stroke-width="1" fill="none" opacity="0.8"/><path d="M45.7 372.5L-0.9 361.1M600.2 375.0L487.5 362.1M633.0 372.4L642.2 358.9M49.6 379.9L131.7 363.9" stroke="#9a9a9a" stroke-width="1" fill="none" opacity="0.85"/><path d="M543.6 774.5L239.1 612.1M239.1 612.1L80.0 527.3M80.0 527.3L-17.8 475.1M943.6 592.4L614.2 511.7M614.2 511.7L412.3 462.3M412.3 462.3L276.0 428.9M276.0 428.9L177.8 404.9M177.8 404.9L103.6 386.7M103.6 386.7L45.7 372.5M804.6 450.6L603.9 419.0M603.9 419.0L459.4 396.3M459.4 396.3L350.4 379.1M350.4 379.1L265.2 365.7M744.6 391.7L600.2 375.0M391.7 725.2L497.1 571.1M497.1 571.1L550.9 492.5M550.9 492.5L583.5 444.7M583.5 444.7L605.4 412.7M605.4 412.7L621.2 389.7M621.2 389.7L633.0 372.4M-258.7 695.0L47.9 555.1M47.9 555.1L207.9 482.0M207.9 482.0L306.1 437.2M306.1 437.2L372.5 406.9M372.5 406.9L420.5 385.0M420.5 385.0L456.7 368.5M-121.7 478.2L40.9 433.9M40.9 433.9L150.7 404.0M150.7 404.0L229.8 382.4M229.8 382.4L289.6 366.1M-59.2 401.2L49.6 379.9" stroke="#9a9a9a" stroke-width="1" fill="none" opacity="0.9"/><defs>
<linearGradient id="cand" x1="0" y1="0" x2="0" y2="1"><stop offset="0" stop-color="#d6cdc0"/><stop offset="0.55" stop-color="#b3a594"/><stop offset="1" stop-color="#5e4a40"/></linearGradient>
<linearGradient id="candh" x1="0" y1="0" x2="1" y2="0"><stop offset="0" stop-color="#9c8e80"/><stop offset="0.3" stop-color="#d8d0c4"/><stop offset="1" stop-color="#8a7c6e"/></linearGradient>
<linearGradient id="cup" x1="0" y1="0" x2="0" y2="1"><stop offset="0" stop-color="#8a6e4e"/><stop offset="0.4" stop-color="#6e5e1e"/><stop offset="1" stop-color="#4a4018"/></linearGradient>
<linearGradient id="tongue" x1="0" y1="0" x2="0" y2="1"><stop offset="0" stop-color="#8e5064"/><stop offset="1" stop-color="#6a3a48"/></linearGradient>
<linearGradient id="plate" x1="0" y1="0" x2="1" y2="0"><stop offset="0" stop-color="#3c3c36"/><stop offset="0.5" stop-color="#262624"/><stop offset="1" stop-color="#4a4a44"/></linearGradient>
<linearGradient id="armtop" x1="0" y1="0" x2="0" y2="1"><stop offset="0" stop-color="#4a4b60"/><stop offset="1" stop-color="#3a3b4e"/></linearGradient>
<linearGradient id="cshade" x1="0" y1="0" x2="0" y2="1"><stop offset="0" stop-color="#6e5a4c" stop-opacity="0"/><stop offset="1" stop-color="#5a4438" stop-opacity="0.9"/></linearGradient>
<linearGradient id="bevel" x1="0" y1="0" x2="1" y2="0"><stop offset="0" stop-color="#9aa0a6"/><stop offset="0.55" stop-color="#7a8a9a"/><stop offset="0.65" stop-color="#2a2a2a"/><stop offset="1" stop-color="#6a6a66"/></linearGradient>
</defs>
<g transform="translate(-2,-62)">
<!-- ceiling plate -->
<path d="M282.8 163.3 L351.5 151.1 L395.2 174.4 L388.8 177.3 L365.5 179.6 L351.5 184.8 L331.7 185.4 L314.2 178.4 L282.8 169.1 Z" fill="#2c2c26"/>
<path d="M282.8 163.3 L351.5 151.1 L395.2 174.4 L393 177 L351 157 L284 168 Z" fill="url(#bevel)"/>
<path d="M313 166 Q340 159 367 166 Q366 183 345 185.6 Q322 185.5 313 166 Z" fill="#4a4a24"/>
<!-- chain -->
<path d="M335 186 L346 186 L345 366 L336 366 Z" fill="#38372c"/>
<path d="M338 192 L342 194 L341 215 L344 240 L339 262 L343 290 L339 318 L342 345 L340 366 L337 366 L337 342 L339 318 L336 290 L340 262 L336 238 L339 215 Z" fill="#7e7e70"/>
<!-- back candle + cup -->
<path d="M302.2 368.7 L317.2 368.7 L317.2 402.4 L303.7 402.4 Z" fill="url(#cand)"/>
<path d="M293.2 401.6 L307.5 397.9 L309.7 409.9 L300 409.9 Z" fill="#5a4c1a"/>
<!-- back-left dark arm piece -->
<path d="M300 415 L314 401 L326 420 L322 450 L306 455 Z" fill="#34364a"/>
<!-- central column -->
<path d="M312 406.9 L313.4 401.6 L349.4 400.9 L352.4 406.9 L355.3 450.6 L382 540 L381.8 562.4 L377 573 L362 567 L350 567 L347 582 L337.6 563.5 L328 526 L326 467 L314 440 Z" fill="#383a4c"/>
<path d="M313.4 401.6 L349.4 400.9 L352.4 406.9 L312 406.9 Z" fill="#50536c"/>
<path d="M322.4 394.9 L341.9 394.9 L341.9 401 L322.4 401 Z" fill="#3a3d50"/>
<path d="M316 410 L330 410 L334 450 L322 452 Z" fill="#46495e"/>
<path d="M326 450 L330 452 L334 530 L341 563 L337.6 563.5 L328 526 Z" fill="#4e5066"/>
<path d="M314 467 L326 467 L328 512 L319 497.6 Z" fill="#5c4c1c"/>
<!-- crown cup -->
<path d="M302.2 370.2 L309 367.2 L328.4 379.9 L338.9 374.7 L350.1 368 L360.6 372.5 L365.5 370.2 L359.9 381.4 L350.9 388.9 L337.4 394.2 L326.9 394.9 L316.4 388.9 L307.5 379.9 Z" fill="#54481a"/>
<path d="M309 367.2 L328.4 379.9 L338.9 374.7 L350.1 368 L345 365 L335 367 L322 364 Z" fill="#6e5236"/>
<path d="M350.1 368 L360.6 372.5 L365.5 370.2 L362 367 L355 366 Z" fill="#9a7050"/>
<!-- left arm: head + lower segment -->
<path d="M125.4 480.8 L133 471.6 L147 467.8 L165.4 466.2 L176.2 467.3 L180.6 474.9 L189.2 482.4 L200 493.3 L209.8 504.1 L217.3 507.3 L228.2 504.1 L236.8 495.4 L250 485.7 L250 532.2 L241.1 534.4 L228.2 527.9 L215.2 523.5 L202.2 519.2 L189.2 508.4 L180.6 499.8 L176.2 506.2 L163.3 512.7 L150.3 516 L138.4 519.2 L155.7 500.8 L133 485.7 L125.4 482.4 Z" fill="#33354a"/>
<path d="M125.4 480.8 L133 471.6 L147 467.8 L165.4 466.2 L176.2 467.3 L180.6 474.9 L189.2 482.4 L200 493.3 L209.8 504.1 L217.3 507.3 L228.2 504.1 L236.8 495.4 L240 505 L228 512 L212 512 L196 500 L182 488 L170 490 L160 494 L150 490 L133 485.7 L125.4 482.4 Z" fill="#44455a"/>
<path d="M140 517 L155.7 501 L160 503 Z" fill="#6a3040"/>
<ellipse cx="158" cy="480" rx="8" ry="4" fill="#505270"/>
<!-- left arm: upper segment -->
<path d="M236 494.3 L271.9 452.4 L283.9 427 L295.9 419.5 L310.8 414.2 L316 440 L312.5 460.5 L290 475 L270.1 489.3 L258 512 L243.2 533.6 L239 519.8 Z" fill="#2c2e3c"/>
<path d="M236 494.3 L271.9 452.4 L283.9 427 L304 445 L290 462 L266 492 L244 512 Z" fill="url(#armtop)"/>
<path d="M283.9 427 L295.9 419.5 L310.8 414.2 L316 440 L304 445 Z" fill="#3a3c52"/>
<!-- right arm -->
<path d="M388.2 450.5 L395.1 469.1 L403.3 484.3 L414.9 494.7 L426.6 501.7 L435.9 500.6 L449.9 486.6 L461.5 474.9 L470.8 462.1 L476.7 461 L491.8 464.5 L503.5 468 L509.3 472.6 L503.5 474.9 L496.5 474.9 L489.5 486.6 L488.3 494.7 L496.5 505.2 L489.5 507.6 L481.3 505.2 L473.2 500.6 L466.2 495.9 L459.2 499.4 L445.2 512.2 L431.2 521.5 L418.4 523.9 L410.3 526.2 L397.5 521.5 L385.8 514.5 L380 505.2 L380 460 Z" fill="#2e3040"/>
<path d="M388.2 450.5 L395.1 469.1 L403.3 484.3 L414.9 494.7 L426.6 501.7 L435.9 500.6 L449.9 486.6 L461.5 474.9 L470.8 462.1 L476.7 461 L491.8 464.5 L503.5 468 L509.3 472.6 L503.5 474.9 L496.5 474.9 L486 480 L470 484 L452 498 L436 510 L420 512 L404 504 L392 492 L384 470 Z" fill="#424356"/>
<ellipse cx="492" cy="474" rx="8" ry="4" fill="#535570"/>
<!-- front candle group -->
<path d="M351.5 431 Q352 425 360 424.5 L386 425.5 Q393.5 427 393.5 433 L392.5 443 Q391 448 389.5 452 L389 499 L356.5 499 L355.5 452 Q352 448 351.5 443 Z" fill="url(#candh)"/><path d="M353 427 Q372 421 392 428 L392 432 Q372 427 353 432 Z" fill="#d0c0b6"/>
<path d="M356 468 L389 468 L389 499 L356.5 499 Z" fill="url(#cshade)"/>
<path d="M335.3 490 Q368.1 512.0 401 494 Q368.1 486.0 335.3 490 Z" fill="url(#cup)"/><path d="M335.3 490 Q368.1 486.0 401 494 Q368.1 498.0 335.3 490 Z" fill="#6e5440"/>
<path d="M343 507 L395 505 L392 516 L346 517 Z" fill="#2a2418"/>
<path d="M343.5 515 C350.7 535.8 384.6 535.8 391.8 514 Q367.6 511.0 343.5 515 Z" fill="url(#cup)"/><path d="M343.5 515 Q367.6 511.0 391.8 514 Q367.6 518.0 343.5 515 Z" fill="#6e5440"/>
<path d="M335.3 490 C345.2 517.3 391.1 517.3 401 494 Q368.1 486.0 335.3 490 Z" fill="url(#cup)"/><path d="M335.3 490 Q368.1 486.0 401 494 Q368.1 498.0 335.3 490 Z" fill="#6e5440"/>
<path d="M362.4 532.4 L373 532.4 L373 537.7 L362.4 537.7 Z" fill="#5e4032"/>
<path d="M333 534 L382 534 L382.5 562 L378.3 574.8 L364.2 567.7 L350 573 L343 576 L336 556 Z" fill="#3a3c50"/><path d="M352 538 L360 538 L358 566 L352 568 Z" fill="#5a5c78"/><path d="M372 538 L378 538 L379 566 L374 569 Z" fill="#4e506a"/>
<path d="M350 567 L364.2 567.7 L378.3 574.8 L376.5 601.2 L371.2 618.9 L364.2 610 L353.6 588.9 Z" fill="url(#tongue)"/>
<!-- side candle groups -->
<path d="M141 390.5 Q141 386 150.2 385.5 L162.3 385.5 Q171.5 386 171.5 390.5 L167 403 L166 436 L148 436 L146.5 403 Z" fill="url(#cand)"/>
<path d="M128.7 435.5 C136.8 449.1 174.5 449.1 182.6 433.5 Q155.6 431.0 128.7 435.5 Z" fill="url(#cup)"/><path d="M128.7 435.5 Q155.6 431.0 182.6 433.5 Q155.6 438.0 128.7 435.5 Z" fill="#6e5440"/>
<path d="M149 446 L162 446 L161 452 L150 452 Z" fill="#2a2418"/>
<path d="M138.3 452.5 C143.6 464.3 168.6 464.3 173.9 450.8 Q156.1 449.1 138.3 452.5 Z" fill="url(#cup)"/><path d="M138.3 452.5 Q156.1 449.1 173.9 450.8 Q156.1 454.1 138.3 452.5 Z" fill="#6e5440"/>
<path d="M152.7 461 L158.5 461 L158.5 469 L152.7 469 Z" fill="#5e4032"/>
<path d="M477 393 Q477 388.5 485.4 388 L496.6 388 Q505 388.5 505 393 L499 405 L498 436 L483 436 L481.5 405 Z" fill="url(#cand)"/>
<path d="M464.5 433 C471.3 447.7 503.0 447.7 509.8 434.5 Q487.1 430.2 464.5 433 Z" fill="url(#cup)"/><path d="M464.5 433 Q487.1 430.2 509.8 434.5 Q487.1 437.2 464.5 433 Z" fill="#6e5440"/>
<path d="M479 445 L497 445 L496 449 L480 449 Z" fill="#2a2418"/>
<path d="M471.3 448 C475.9 459.4 497.5 459.4 502.1 449.5 Q486.7 446.2 471.3 448 Z" fill="url(#cup)"/><path d="M471.3 448 Q486.7 446.2 502.1 449.5 Q486.7 451.2 471.3 448 Z" fill="#6e5440"/>
<path d="M483.8 456.5 L490.5 456.5 L490.5 462.4 L483.8 462.4 Z" fill="#5e4032"/>
<!-- wireframes -->
<g stroke="#ffffff" stroke-width="1" fill="none">
<path d="M331 186 L330 368 M348 186 L347 368 M340.7 184 L335.5 368 M344 188 L341 366 M330 368 L347 368"/>
<path d="M291 364.4 L299.7 361.6 L378.6 364.4 L342 368.3 Z M291 364.4 L289.1 511.7 M296.8 366 L296.8 415.5 M378.6 364.4 L377.7 413.5 M342 368.3 L340.1 530 M265 511.7 L289.1 511.7 L308.3 504 L303.5 450 M344 369 L265 511.7 M378.6 367 L355.5 446.3"/>
<path d="M180.6 463 L178.4 475.4 M180.6 463 L233.6 500.8 M178.4 475.4 L239 517 M207.6 508.9 L239 517 M210.8 529 L217.3 534.4 L234.6 517 M217.3 534.4 L236.8 529 M233.6 500.8 L234.6 517 M240 494.4 L303.5 450.1 M267 490.5 L303.5 463.6 M236 497 L302 416.5"/>
<path d="M138.3 383.5 L166.2 379.2 L189.3 382.5 L160.4 387.3 Z M138.3 383.5 L138.9 519.2 L161.6 530 L189.2 518.7 L189.3 382.5 M160.4 387.3 L161.6 530 M166 380 L147 464 M176.2 450 L161.6 529.5 M188 390 L176.2 450"/>
<path d="M468.4 382.5 L479 379.2 L510.7 382.5 L499.2 385.4 Z M468.4 382.5 L463.3 506.4 L493.6 513.4 L503.5 505.2 L510.7 382.5 M499.2 385.4 L493.6 513.4 M510 383 L485 510 M479 380 L466 500"/>
<path d="M390.2 445.4 L426.9 493.3 L426.1 509.7 M426.9 493.3 L472.5 455.8 L475.5 467.1 M391.7 474.6 L426.9 493.3 M391.7 479.8 L426.1 509.7 L474.8 467.8 M426.1 509.7 L444.8 500.7 M416.4 508.2 L438.8 508.2 M434.4 521.7 L459.8 499.2"/>
<path d="M342.7 417.3 L368.2 411.4 L405.6 417.3 L383.1 423.3 Z M342.7 417.3 L338.2 601.4 L375.6 616.4 L401.1 598.4 L405.6 417.3 M383.1 423.3 L375.6 616.4 M370 412 L348 584 M405 420 L378 615"/>
</g>
</g>
</svg>
</div>
<div class="abs" style="left:2px;top:650px;width:676px;height:4px;background:#fff"></div>
<div class="abs" style="left:2px;top:708px;width:676px;height:3px;background:#f8f8f8"></div>

<!-- COLLISION LIST -->
<div class="hdr" style="left:2px;top:654px;width:676px;height:21px"><span class="fit" style="--w:71">コリジョンリスト</span></div>
<div class="btn" style="left:5px;top:681px;width:24px;height:24px">
  <svg width="24" height="24" style="position:absolute;left:-1px;top:-1px"><path d="M10.5 5h3v5.5h5.5v3h-5.5v5.5h-3v-5.5h-5.5v-3h5.5z" fill="#606060"/></svg>
</div>
<div class="btn" style="left:35px;top:681px;width:24px;height:24px">
  <svg width="24" height="24" style="position:absolute;left:-1px;top:-1px"><path d="M9.5 4.5h5v1.5h4.5v2.5h-14v-2.5h4.5z" fill="#606060"/><path d="M6 10h12l-1.2 9h-9.6z" fill="#606060"/><path d="M9.3 11.5v6M12 11.5v6M14.7 11.5v6" stroke="#f7f7f7" stroke-width="1"/></svg>
</div>
<div class="abs" style="left:2px;top:711px;width:677px;height:182px;background:#fff;border:1px solid #828790"></div>
<div class="abs" style="left:6px;top:715px;width:269px;height:21px;background:#ececec"></div>
<div class="abs" style="left:8px;top:718px;font-size:13px;line-height:17px;white-space:nowrap"><span class="fit" style="--w:264.8">sb_obj_DemonsCastle003_chandelier_col</span></div>

<!-- RIGHT PANEL -->
<div class="abs" style="left:1164px;top:0;width:14px;height:1px;background:#4a4a4a;border-radius:0 0 2px 2px"></div>
<div class="abs" style="left:1183px;top:0;width:15px;height:1px;background:#e04a7a;border-radius:0 0 2px 2px"></div>
<div class="hdr" style="left:682px;top:5px;width:518px;height:21px"><span class="fit" style="--w:85">物理設定の設定</span></div>
<div class="abs" style="left:682px;top:26px;width:518px;height:56px;background:#f6f0d6;border-left:1px solid #a0a0a0;border-right:1px solid #a0a0a0;border-bottom:2px solid #a0a0a0"></div>
<div class="gold" style="left:685px;top:29px;width:512px;height:29px"><div class="ic"></div><svg class="abs" style="left:4px;top:9px" width="12" height="12"><path d="M3.2 4.8 L6 7.6 L8.8 4.8" stroke="#c28e00" stroke-width="2" fill="none"/></svg><div class="tx"><span class="fit" style="--w:26">名前</span></div></div>
<div class="abs" style="left:682px;top:60px;width:518px;height:1px;background:#a0a0a0"></div>
<div class="abs" style="left:687px;top:62px;font-size:13px;line-height:18px;white-space:nowrap"><span class="fit" style="--w:265">sb_obj_DemonsCastle003_chandelier_col</span></div>
<svg class="abs" style="left:1182px;top:62px" width="17" height="17"><path d="M9.5 1.5 L15 7 L8 14 L3 14 L3 9 Z" fill="#9e9e9e"/><path d="M4.5 12.5 L4.5 10 L7 12.5 Z" fill="#f6f0d6"/></svg>

<!-- grid area -->
<div class="abs" style="left:682px;top:82px;width:501px;height:811px;background:#f6f0d6;border-left:1px solid #a0a0a0;border-right:1px solid #a0a0a0;overflow:hidden">
<div class="gold" style="left:2px;top:2px;width:495px;height:28px"><div class="ic" style="top:8px"></div><svg class="abs" style="left:4px;top:8px" width="12" height="12"><path d="M3.2 4.6 L6 7.4 L8.8 4.6" stroke="#c28e00" stroke-width="2" fill="none"/></svg><div class="tx" style="line-height:28px"><span class="fit" style="--w:26">基本</span></div></div>
<div class="abs" style="left:0;top:33px;width:500px;height:1px;background:#a0a0a0"></div>
<div class="abs" style="left:0;top:34px;width:500px;height:19px;background:#f6f0d6;color:#000;font-size:13px;white-space:nowrap"><div class="abs" style="left:4px;top:0px;line-height:20px"><span class="fit" style="--w:25">名前</span></div><div class="abs" style="left:197px;top:0px;line-height:20px"><span class="fit" style="--w:264.8">sb_obj_DemonsCastle003_chandelier_col</span></div><svg class="abs" style="left:482px;top:2px" width="17" height="16"><path d="M10 1.5 L15.5 7 L8.5 14 L3.5 14 L3.5 9 Z" fill="#9e9e9e"/><path d="M5 12.5 L5 10.2 L7.3 12.5 Z" fill="#f6f0d6"/></svg></div>
<div class="abs" style="left:0;top:53px;width:500px;height:1px;background:#a0a0a0"></div>
<div class="abs" style="left:0;top:54px;width:500px;height:19px;background:#f6f0d6;color:#000;font-size:13px;white-space:nowrap"><div class="abs" style="left:4px;top:0px;line-height:20px"><span class="fit" style="--w:65">アタッチノード</span></div><div class="abs" style="left:197px;top:0px;line-height:20px"><span class="fit" style="--w:33.4">Bone</span></div><svg class="abs" style="left:483px;top:2px" width="15" height="15"><path d="M1.5 7.5 L13 7.5 M8 2.5 L13 7.5 L8 12.5" stroke="#9e9e9e" stroke-width="1.8" fill="none"/></svg></div>
<div class="abs" style="left:0;top:73px;width:500px;height:1px;background:#a0a0a0"></div>
<div class="abs" style="left:0;top:74px;width:500px;height:19px;background:#f6f0d6;color:#000;font-size:13px;white-space:nowrap"><div class="abs" style="left:4px;top:0px;line-height:20px"><span class="fit" style="--w:40.4">Shape</span></div><div class="abs" style="left:197px;top:0px;line-height:20px"><span class="fit" style="--w:33">Mesh</span></div><svg class="abs" style="left:483px;top:2px" width="15" height="15"><rect x="0.5" y="1" width="14" height="13.5" rx="2.5" fill="#9e9e9e"/><path d="M2.5 2.5 L12.5 2.5 L7.5 8 Z" fill="#f6f0d6"/></svg></div>
<div class="abs" style="left:0;top:93px;width:500px;height:1px;background:#a0a0a0"></div>
<div class="abs" style="left:0;top:94px;width:500px;height:19px;background:#f6f0d6;color:#000;font-size:13px;white-space:nowrap"><div class="abs" style="left:4px;top:0px;line-height:20px"><span class="fit" style="--w:26">種類</span></div><div class="abs" style="left:197px;top:0px;line-height:20px"><span class="fit" style="--w:50.8">Collision</span></div><svg class="abs" style="left:483px;top:2px" width="15" height="15"><rect x="0.5" y="1" width="14" height="13.5" rx="2.5" fill="#9e9e9e"/><path d="M2.5 2.5 L12.5 2.5 L7.5 8 Z" fill="#f6f0d6"/></svg></div>
<div class="abs" style="left:0;top:113px;width:500px;height:1px;background:#a0a0a0"></div>
<div class="abs" style="left:0;top:114px;width:500px;height:19px;background:#f6f0d6;color:#000;font-size:13px;white-space:nowrap"><div class="abs" style="left:4px;top:0px;line-height:20px"><span class="fit" style="--w:26">質量</span></div><div class="abs" style="left:197px;top:0px;line-height:20px"><span class="fit" style="--w:7.5">1</span></div><svg class="abs" style="left:483px;top:2px" width="15" height="15"><circle cx="7.5" cy="7.5" r="7" fill="#9e9e9e"/><path d="M4.3 6.3 L7.5 3.3 L10.7 6.3 Z M4.3 8.7 L7.5 11.7 L10.7 8.7 Z" fill="#f6f0d6"/></svg></div>
<div class="abs" style="left:0;top:133px;width:500px;height:1px;background:#a0a0a0"></div>
<div class="abs" style="left:0;top:134px;width:500px;height:19px;background:#f6f0d6;color:#000;font-size:13px;white-space:nowrap"><div class="abs" style="left:4px;top:0px;line-height:20px"><span class="fit" style="--w:52">摩擦係数</span></div><div class="abs" style="left:197px;top:0px;line-height:20px"><span class="fit" style="--w:7.5">1</span></div><svg class="abs" style="left:483px;top:2px" width="15" height="15"><circle cx="7.5" cy="7.5" r="7" fill="#9e9e9e"/><path d="M4.3 6.3 L7.5 3.3 L10.7 6.3 Z M4.3 8.7 L7.5 11.7 L10.7 8.7 Z" fill="#f6f0d6"/></svg></div>
<div class="abs" style="left:0;top:153px;width:500px;height:1px;background:#a0a0a0"></div>
<div class="abs" style="left:0;top:154px;width:500px;height:19px;background:#f6f0d6;color:#000;font-size:13px;white-space:nowrap"><div class="abs" style="left:4px;top:0px;line-height:20px"><span class="fit" style="--w:52">反発係数</span></div><div class="abs" style="left:197px;top:0px;line-height:20px"><span class="fit" style="--w:7.5">1</span></div><svg class="abs" style="left:483px;top:2px" width="15" height="15"><circle cx="7.5" cy="7.5" r="7" fill="#9e9e9e"/><path d="M4.3 6.3 L7.5 3.3 L10.7 6.3 Z M4.3 8.7 L7.5 11.7 L10.7 8.7 Z" fill="#f6f0d6"/></svg></div>
<div class="abs" style="left:0;top:173px;width:500px;height:1px;background:#a0a0a0"></div>
<div class="abs" style="left:0;top:174px;width:500px;height:19px;background:#f6f0d6;color:#000;font-size:13px;white-space:nowrap"><div class="abs" style="left:4px;top:0px;line-height:20px"><span class="fit" style="--w:52">速度減衰</span></div><div class="abs" style="left:197px;top:0px;line-height:20px"><span class="fit" style="--w:21">0.2</span></div><svg class="abs" style="left:483px;top:2px" width="15" height="15"><circle cx="7.5" cy="7.5" r="7" fill="#9e9e9e"/><path d="M4.3 6.3 L7.5 3.3 L10.7 6.3 Z M4.3 8.7 L7.5 11.7 L10.7 8.7 Z" fill="#f6f0d6"/></svg></div>
<div class="abs" style="left:0;top:193px;width:500px;height:1px;background:#a0a0a0"></div>
<div class="abs" style="left:0;top:194px;width:500px;height:19px;background:#f6f0d6;color:#000;font-size:13px;white-space:nowrap"><div class="abs" style="left:4px;top:0px;line-height:20px"><span class="fit" style="--w:65">角速度減衰</span></div><div class="abs" style="left:197px;top:0px;line-height:20px"><span class="fit" style="--w:21">0.2</span></div><svg class="abs" style="left:483px;top:2px" width="15" height="15"><circle cx="7.5" cy="7.5" r="7" fill="#9e9e9e"/><path d="M4.3 6.3 L7.5 3.3 L10.7 6.3 Z M4.3 8.7 L7.5 11.7 L10.7 8.7 Z" fill="#f6f0d6"/></svg></div>
<div class="abs" style="left:0;top:213px;width:500px;height:1px;background:#a0a0a0"></div>
<div class="abs" style="left:0;top:214px;width:500px;height:19px;background:#f6f0d6;color:#000;font-size:13px;white-space:nowrap"><div class="abs" style="left:4px;top:0px;line-height:20px"><span class="fit" style="--w:50">アクセサリ</span></div><div class="abs" style="left:197px;top:0px;line-height:20px"><span class="fit" style="--w:0"></span></div><svg class="abs" style="left:196px;top:2px" width="34" height="16"><rect x="0.3" y="0" width="31.8" height="16" rx="8" fill="#6a6a6a"/><circle cx="8" cy="8" r="6" fill="#cfcfcf"/></svg></div>
<div class="abs" style="left:0;top:233px;width:500px;height:1px;background:#a0a0a0"></div>
<div class="abs" style="left:0;top:234px;width:500px;height:19px;background:#f6f0d6;color:#000;font-size:13px;white-space:nowrap"><div class="abs" style="left:4px;top:0px;line-height:20px"><span class="fit" style="--w:76">CapsuleAxis</span></div><div class="abs" style="left:197px;top:0px;line-height:20px"><span class="fit" style="--w:9">Y</span></div><svg class="abs" style="left:483px;top:2px" width="15" height="15"><rect x="0.5" y="1" width="14" height="13.5" rx="2.5" fill="#9e9e9e"/><path d="M2.5 2.5 L12.5 2.5 L7.5 8 Z" fill="#f6f0d6"/></svg></div>
<div class="abs" style="left:0;top:253px;width:500px;height:1px;background:#a0a0a0"></div>
<div class="abs" style="left:0;top:254px;width:500px;height:19px;background:#e8e8e8;color:#a6a6a6;font-size:13px;white-space:nowrap"><div class="abs" style="left:4px;top:0px;line-height:20px"><span class="fit" style="--w:82.5">メッシュモデル名</span></div><div class="abs" style="left:197px;top:0px;line-height:20px"><span class="fit" style="--w:264.8">sb_obj_DemonsCastle003_chandelier_col</span></div></div>
<div class="abs" style="left:0;top:273px;width:500px;height:1px;background:#a0a0a0"></div>
<div class="abs" style="left:0;top:274px;width:500px;height:132px;background:#f6f0d6;color:#000;font-size:13px;white-space:nowrap"><div class="abs" style="left:4px;top:57px;line-height:20px"><span class="fit" style="--w:37">メッシュ</span></div><div class="abs" style="left:197px;top:57px;line-height:20px"><span class="fit" style="--w:0"></span></div><svg class="abs" style="left:483px;top:115px" width="15" height="15"><path d="M1.5 7.5 L13 7.5 M8 2.5 L13 7.5 L8 12.5" stroke="#9e9e9e" stroke-width="1.8" fill="none"/></svg><svg class="abs" style="left:192px;top:2px" width="128" height="128"><rect width="128" height="128" fill="#4b4b4b"/><path d="M51 23.5 L66.5 18.5 L77 26.8 L67.5 30 L66.8 61.5 L70 51.5 L75.8 49.3 L80.3 52.4 L80.8 80.3 L77 82.6 L88 98.9 L96.6 94.3 L97.4 75 L104.3 72.9 L108 76.4 L108 106 L102 107 L96.6 102.8 L91.2 106.7 L74.9 100.5 L61.7 103.6 L57.8 118.3 L52.4 119.8 L47.7 116.7 L46.2 99 L36.9 99 L31.5 94.3 L26 95.5 L19.8 94.3 L19.8 64 L26 62 L31 64.8 L32.2 85 L40 92 L51.6 81.1 L53.6 64.8 L61.7 62.5 L61.7 31.9 L59.4 31.9 Z" fill="#fff"/></svg><svg class="abs" style="left:470px;top:85px" width="28" height="28"><rect width="28" height="28" rx="2" fill="#fff"/><path d="M5.9 5.4 L10.2 1.6 L19.3 1.6 L19.3 16.9 L16 19.5 L5 19.5 L5 13.2 L1.8 12.8 L1.8 9.7 L5 9.7 L5 6.5 Z" fill="#fff" stroke="#555" stroke-width="2" stroke-linejoin="miter"/><path d="M14.5 5 L19.3 1.6 L19.3 16.9 L14.5 19.5 Z" fill="#555"/><path d="M5.9 5.4 L15 5.4" stroke="#555" stroke-width="2"/><rect x="9.2" y="8.7" width="2" height="2" fill="#555"/><path d="M6 15.4 L10.5 15.4 L12 14" stroke="#555" stroke-width="1.4" fill="none"/><path d="M24.2 15.5 L24.2 22.7 L16.5 22.7" stroke="#555" stroke-width="2.2" fill="none"/><path d="M13.6 22.9 L17.5 19.8 L17.5 26 Z" fill="#555"/></svg></div>
<div class="abs" style="left:0;top:406px;width:500px;height:1px;background:#a0a0a0"></div>
<div class="abs" style="left:0;top:407px;width:500px;height:19px;background:#f6f0d6;color:#000;font-size:13px;white-space:nowrap"><div class="abs" style="left:4px;top:0px;line-height:20px"><span class="fit" style="--w:36">位置X</span></div><div class="abs" style="left:197px;top:0px;line-height:20px"><span class="fit" style="--w:8.5">0</span></div><svg class="abs" style="left:483px;top:2px" width="15" height="15"><circle cx="7.5" cy="7.5" r="7" fill="#9e9e9e"/><path d="M4.3 6.3 L7.5 3.3 L10.7 6.3 Z M4.3 8.7 L7.5 11.7 L10.7 8.7 Z" fill="#f6f0d6"/></svg></div>
<div class="abs" style="left:0;top:426px;width:500px;height:1px;background:#a0a0a0"></div>
<div class="abs" style="left:0;top:427px;width:500px;height:19px;background:#f6f0d6;color:#000;font-size:13px;white-space:nowrap"><div class="abs" style="left:4px;top:0px;line-height:20px"><span class="fit" style="--w:36">位置Y</span></div><div class="abs" style="left:197px;top:0px;line-height:20px"><span class="fit" style="--w:29">1.16</span></div><svg class="abs" style="left:483px;top:2px" width="15" height="15"><circle cx="7.5" cy="7.5" r="7" fill="#9e9e9e"/><path d="M4.3 6.3 L7.5 3.3 L10.7 6.3 Z M4.3 8.7 L7.5 11.7 L10.7 8.7 Z" fill="#f6f0d6"/></svg></div>
<div class="abs" style="left:0;top:446px;width:500px;height:1px;background:#a0a0a0"></div>
<div class="abs" style="left:0;top:447px;width:500px;height:19px;background:#f6f0d6;color:#000;font-size:13px;white-space:nowrap"><div class="abs" style="left:4px;top:0px;line-height:20px"><span class="fit" style="--w:36">位置Z</span></div><div class="abs" style="left:197px;top:0px;line-height:20px"><span class="fit" style="--w:8.5">0</span></div><svg class="abs" style="left:483px;top:2px" width="15" height="15"><circle cx="7.5" cy="7.5" r="7" fill="#9e9e9e"/><path d="M4.3 6.3 L7.5 3.3 L10.7 6.3 Z M4.3 8.7 L7.5 11.7 L10.7 8.7 Z" fill="#f6f0d6"/></svg></div>
<div class="abs" style="left:0;top:466px;width:500px;height:1px;background:#a0a0a0"></div>
<div class="abs" style="left:0;top:467px;width:500px;height:19px;background:#f6f0d6;color:#000;font-size:13px;white-space:nowrap"><div class="abs" style="left:4px;top:0px;line-height:20px"><span class="fit" style="--w:36">回転X</span></div><div class="abs" style="left:197px;top:0px;line-height:20px"><span class="fit" style="--w:24">180</span></div><svg class="abs" style="left:483px;top:2px" width="15" height="15"><circle cx="7.5" cy="7.5" r="7" fill="#9e9e9e"/><path d="M4.3 6.3 L7.5 3.3 L10.7 6.3 Z M4.3 8.7 L7.5 11.7 L10.7 8.7 Z" fill="#f6f0d6"/></svg></div>
<div class="abs" style="left:0;top:486px;width:500px;height:1px;background:#a0a0a0"></div>
<div class="abs" style="left:0;top:487px;width:500px;height:19px;background:#f6f0d6;color:#000;font-size:13px;white-space:nowrap"><div class="abs" style="left:4px;top:0px;line-height:20px"><span class="fit" style="--w:36">回転Y</span></div><div class="abs" style="left:197px;top:0px;line-height:20px"><span class="fit" style="--w:8.5">0</span></div><svg class="abs" style="left:483px;top:2px" width="15" height="15"><circle cx="7.5" cy="7.5" r="7" fill="#9e9e9e"/><path d="M4.3 6.3 L7.5 3.3 L10.7 6.3 Z M4.3 8.7 L7.5 11.7 L10.7 8.7 Z" fill="#f6f0d6"/></svg></div>
<div class="abs" style="left:0;top:506px;width:500px;height:1px;background:#a0a0a0"></div>
<div class="abs" style="left:0;top:507px;width:500px;height:19px;background:#f6f0d6;color:#000;font-size:13px;white-space:nowrap"><div class="abs" style="left:4px;top:0px;line-height:20px"><span class="fit" style="--w:35">回転Z</span></div><div class="abs" style="left:197px;top:0px;line-height:20px"><span class="fit" style="--w:8.5">0</span></div><svg class="abs" style="left:483px;top:2px" width="15" height="15"><circle cx="7.5" cy="7.5" r="7" fill="#9e9e9e"/><path d="M4.3 6.3 L7.5 3.3 L10.7 6.3 Z M4.3 8.7 L7.5 11.7 L10.7 8.7 Z" fill="#f6f0d6"/></svg></div>
<div class="abs" style="left:0;top:526px;width:500px;height:1px;background:#a0a0a0"></div>
<div class="abs" style="left:0;top:527px;width:500px;height:19px;background:#f6f0d6;color:#000;font-size:13px;white-space:nowrap"><div class="abs" style="left:4px;top:0px;line-height:20px"><span class="fit" style="--w:40.4">サイズX</span></div><div class="abs" style="left:197px;top:0px;line-height:20px"><span class="fit" style="--w:7.5">1</span></div><svg class="abs" style="left:483px;top:2px" width="15" height="15"><circle cx="7.5" cy="7.5" r="7" fill="#9e9e9e"/><path d="M4.3 6.3 L7.5 3.3 L10.7 6.3 Z M4.3 8.7 L7.5 11.7 L10.7 8.7 Z" fill="#f6f0d6"/></svg></div>
<div class="abs" style="left:0;top:546px;width:500px;height:1px;background:#a0a0a0"></div>
<div class="abs" style="left:0;top:547px;width:500px;height:19px;background:#f6f0d6;color:#000;font-size:13px;white-space:nowrap"><div class="abs" style="left:4px;top:0px;line-height:20px"><span class="fit" style="--w:40.4">サイズY</span></div><div class="abs" style="left:197px;top:0px;line-height:20px"><span class="fit" style="--w:7.5">1</span></div><svg class="abs" style="left:483px;top:2px" width="15" height="15"><circle cx="7.5" cy="7.5" r="7" fill="#9e9e9e"/><path d="M4.3 6.3 L7.5 3.3 L10.7 6.3 Z M4.3 8.7 L7.5 11.7 L10.7 8.7 Z" fill="#f6f0d6"/></svg></div>
<div class="abs" style="left:0;top:566px;width:500px;height:1px;background:#a0a0a0"></div>
<div class="abs" style="left:0;top:567px;width:500px;height:19px;background:#f6f0d6;color:#000;font-size:13px;white-space:nowrap"><div class="abs" style="left:4px;top:0px;line-height:20px"><span class="fit" style="--w:40.4">サイズZ</span></div><div class="abs" style="left:197px;top:0px;line-height:20px"><span class="fit" style="--w:7.5">1</span></div><svg class="abs" style="left:483px;top:2px" width="15" height="15"><circle cx="7.5" cy="7.5" r="7" fill="#9e9e9e"/><path d="M4.3 6.3 L7.5 3.3 L10.7 6.3 Z M4.3 8.7 L7.5 11.7 L10.7 8.7 Z" fill="#f6f0d6"/></svg></div>
<div class="abs" style="left:0;top:586px;width:500px;height:1px;background:#a0a0a0"></div>
<div class="gold" style="left:2px;top:589px;width:495px;height:29px"><div class="ic" style="top:8px"></div><svg class="abs" style="left:4px;top:8px" width="12" height="12"><path d="M3.2 4.6 L6 7.4 L8.8 4.6" stroke="#c28e00" stroke-width="2" fill="none"/></svg><div class="tx" style="line-height:29px"><span class="fit" style="--w:112">6軸自由度拘束設定</span></div></div>
<div class="abs" style="left:0;top:621px;width:500px;height:1px;background:#a0a0a0"></div>
<div class="abs" style="left:0;top:622px;width:500px;height:19px;background:#f6f0d6;color:#000;font-size:13px;white-space:nowrap"><div class="abs" style="left:4px;top:0px;line-height:20px"><span class="fit" style="--w:118.5">6軸自由度拘束を使う</span></div><div class="abs" style="left:197px;top:0px;line-height:20px"><span class="fit" style="--w:0"></span></div><svg class="abs" style="left:196px;top:2px" width="34" height="16"><rect x="0.3" y="0" width="31.8" height="16" rx="8" fill="#6a6a6a"/><circle cx="8" cy="8" r="6" fill="#cfcfcf"/></svg></div>
<div class="abs" style="left:0;top:641px;width:500px;height:1px;background:#a0a0a0"></div>
<div class="abs" style="left:0;top:642px;width:500px;height:19px;background:#e8e8e8;color:#a6a6a6;font-size:13px;white-space:nowrap"><div class="abs" style="left:4px;top:0px;line-height:20px"><span class="fit" style="--w:149">6軸自由度拘束の親剛体名</span></div><div class="abs" style="left:197px;top:0px;line-height:20px"><span class="fit" style="--w:0"></span></div></div>
<div class="abs" style="left:0;top:661px;width:500px;height:1px;background:#a0a0a0"></div>
<div class="abs" style="left:0;top:662px;width:500px;height:19px;background:#e8e8e8;color:#a6a6a6;font-size:13px;white-space:nowrap"><div class="abs" style="left:4px;top:0px;line-height:20px"><span class="fit" style="--w:47.8">ピボットX</span></div><div class="abs" style="left:197px;top:0px;line-height:20px"><span class="fit" style="--w:8.5">0</span></div></div>
<div class="abs" style="left:0;top:681px;width:500px;height:1px;background:#a0a0a0"></div>
<div class="abs" style="left:0;top:682px;width:500px;height:19px;background:#e8e8e8;color:#a6a6a6;font-size:13px;white-space:nowrap"><div class="abs" style="left:4px;top:0px;line-height:20px"><span class="fit" style="--w:47">ピボットY</span></div><div class="abs" style="left:197px;top:0px;line-height:20px"><span class="fit" style="--w:8.5">0</span></div></div>
<div class="abs" style="left:0;top:701px;width:500px;height:1px;background:#a0a0a0"></div>
<div class="abs" style="left:0;top:702px;width:500px;height:19px;background:#e8e8e8;color:#a6a6a6;font-size:13px;white-space:nowrap"><div class="abs" style="left:4px;top:0px;line-height:20px"><span class="fit" style="--w:47">ピボットZ</span></div><div class="abs" style="left:197px;top:0px;line-height:20px"><span class="fit" style="--w:8.5">0</span></div></div>
<div class="abs" style="left:0;top:721px;width:500px;height:1px;background:#a0a0a0"></div>
<div class="abs" style="left:0;top:722px;width:500px;height:19px;background:#e8e8e8;color:#a6a6a6;font-size:13px;white-space:nowrap"><div class="abs" style="left:4px;top:0px;line-height:20px"><span class="fit" style="--w:123.7">X軸最小スライド制限値</span></div><div class="abs" style="left:197px;top:0px;line-height:20px"><span class="fit" style="--w:8.5">0</span></div></div>
<div class="abs" style="left:0;top:741px;width:500px;height:1px;background:#a0a0a0"></div>
<div class="abs" style="left:0;top:742px;width:500px;height:19px;background:#e8e8e8;color:#a6a6a6;font-size:13px;white-space:nowrap"><div class="abs" style="left:4px;top:0px;line-height:20px"><span class="fit" style="--w:123.7">Y軸最小スライド制限値</span></div><div class="abs" style="left:197px;top:0px;line-height:20px"><span class="fit" style="--w:8.5">0</span></div></div>
<div class="abs" style="left:0;top:761px;width:500px;height:1px;background:#a0a0a0"></div>
<div class="abs" style="left:0;top:762px;width:500px;height:19px;background:#e8e8e8;color:#a6a6a6;font-size:13px;white-space:nowrap"><div class="abs" style="left:4px;top:0px;line-height:20px"><span class="fit" style="--w:123.7">Z軸最小スライド制限値</span></div><div class="abs" style="left:197px;top:0px;line-height:20px"><span class="fit" style="--w:8.5">0</span></div></div>
<div class="abs" style="left:0;top:781px;width:500px;height:1px;background:#a0a0a0"></div>
<div class="abs" style="left:0;top:782px;width:500px;height:19px;background:#e8e8e8;color:#a6a6a6;font-size:13px;white-space:nowrap"><div class="abs" style="left:4px;top:0px;line-height:20px"><span class="fit" style="--w:124.5">X軸最大スライド制限値</span></div><div class="abs" style="left:197px;top:0px;line-height:20px"><span class="fit" style="--w:8.5">0</span></div></div>
<div class="abs" style="left:0;top:801px;width:500px;height:1px;background:#a0a0a0"></div>
<div class="abs" style="left:0;top:802px;width:500px;height:19px;background:#e8e8e8;color:#a6a6a6;font-size:13px;white-space:nowrap"><div class="abs" style="left:4px;top:0px;line-height:20px"><span class="fit" style="--w:124.5">Y軸最大スライド制限値</span></div><div class="abs" style="left:197px;top:0px;line-height:20px"><span class="fit" style="--w:8.5">0</span></div></div>
<div class="abs" style="left:0;top:821px;width:500px;height:1px;background:#a0a0a0"></div>
<div class="abs" style="left:191px;top:33px;width:1px;height:241px;background:#a0a0a0"></div>
<div class="abs" style="left:191px;top:274px;width:1px;height:313px;background:#a0a0a0"></div>
<div class="abs" style="left:191px;top:621px;width:1px;height:197px;background:#a0a0a0"></div>
</div>
<!-- scrollbar -->
<div class="abs" style="left:1183px;top:82px;width:17px;height:811px;background:#f0f0f0"></div>
<div class="abs" style="left:1184px;top:98px;width:15px;height:465px;background:#cdcdcd"></div>
<svg class="abs" style="left:1183px;top:82px" width="17" height="16"><path d="M5 10 L8.5 6.5 L12 10" stroke="#555" stroke-width="1.6" fill="none"/></svg>
<svg class="abs" style="left:1183px;top:877px" width="17" height="16"><path d="M5 6 L8.5 9.5 L12 6" stroke="#555" stroke-width="1.6" fill="none"/></svg>

<!-- STATUS BAR -->
<div class="abs" style="left:0;top:897px;width:1200px;height:36px;background:#6a6a6a"></div>
<div class="abs" style="left:-3px;top:906px;font-size:11.5px;line-height:16px;color:#fff;white-space:nowrap"><span class="fit" style="--w:406">全ての素材管理を行います。3Dスタンプ、2Dスタンプの作成もここで行います。</span></div>
<div class="abs" style="left:997px;top:903px;width:92px;height:24px;background:#b4b4b4;border-radius:4px"></div>
<div class="abs" style="left:1002px;top:906px;width:18px;height:18px;background:#5b88e0;border-radius:2px"></div>
<svg class="abs" style="left:1002px;top:906px" width="18" height="18"><path d="M4 9.5 L7.5 13 L14 5.5" stroke="#fff" stroke-width="2.2" fill="none"/></svg>
<div class="abs" style="left:1027px;top:907px;font-size:13px;line-height:16px;color:#000">OK</div>
<div class="abs" style="left:1093px;top:903px;width:101px;height:24px;background:#b4b4b4;border-radius:4px"></div>
<div class="abs" style="left:1098px;top:906px;width:18px;height:18px;background:#c7a4ac;border-radius:2px"></div>
<svg class="abs" style="left:1098px;top:906px" width="18" height="18"><path d="M5 5 L13 13 M13 5 L5 13" stroke="#e8e0e2" stroke-width="2" fill="none"/></svg>
<div class="abs" style="left:1123px;top:907px;font-size:12px;line-height:16px;color:#7a7a7a;white-space:nowrap"><span class="fit" style="--w:47">キャンセル</span></div>
<script>
(function(){var els=document.querySelectorAll('.fit');for(var i=0;i<els.length;i++){var e=els[i];var w=parseFloat(getComputedStyle(e).getPropertyValue('--w'));var n=e.getBoundingClientRect().width;if(w>0&&n>0){e.style.transform='scaleX('+(w/n)+')';}}})();
</script>
</body></html>
